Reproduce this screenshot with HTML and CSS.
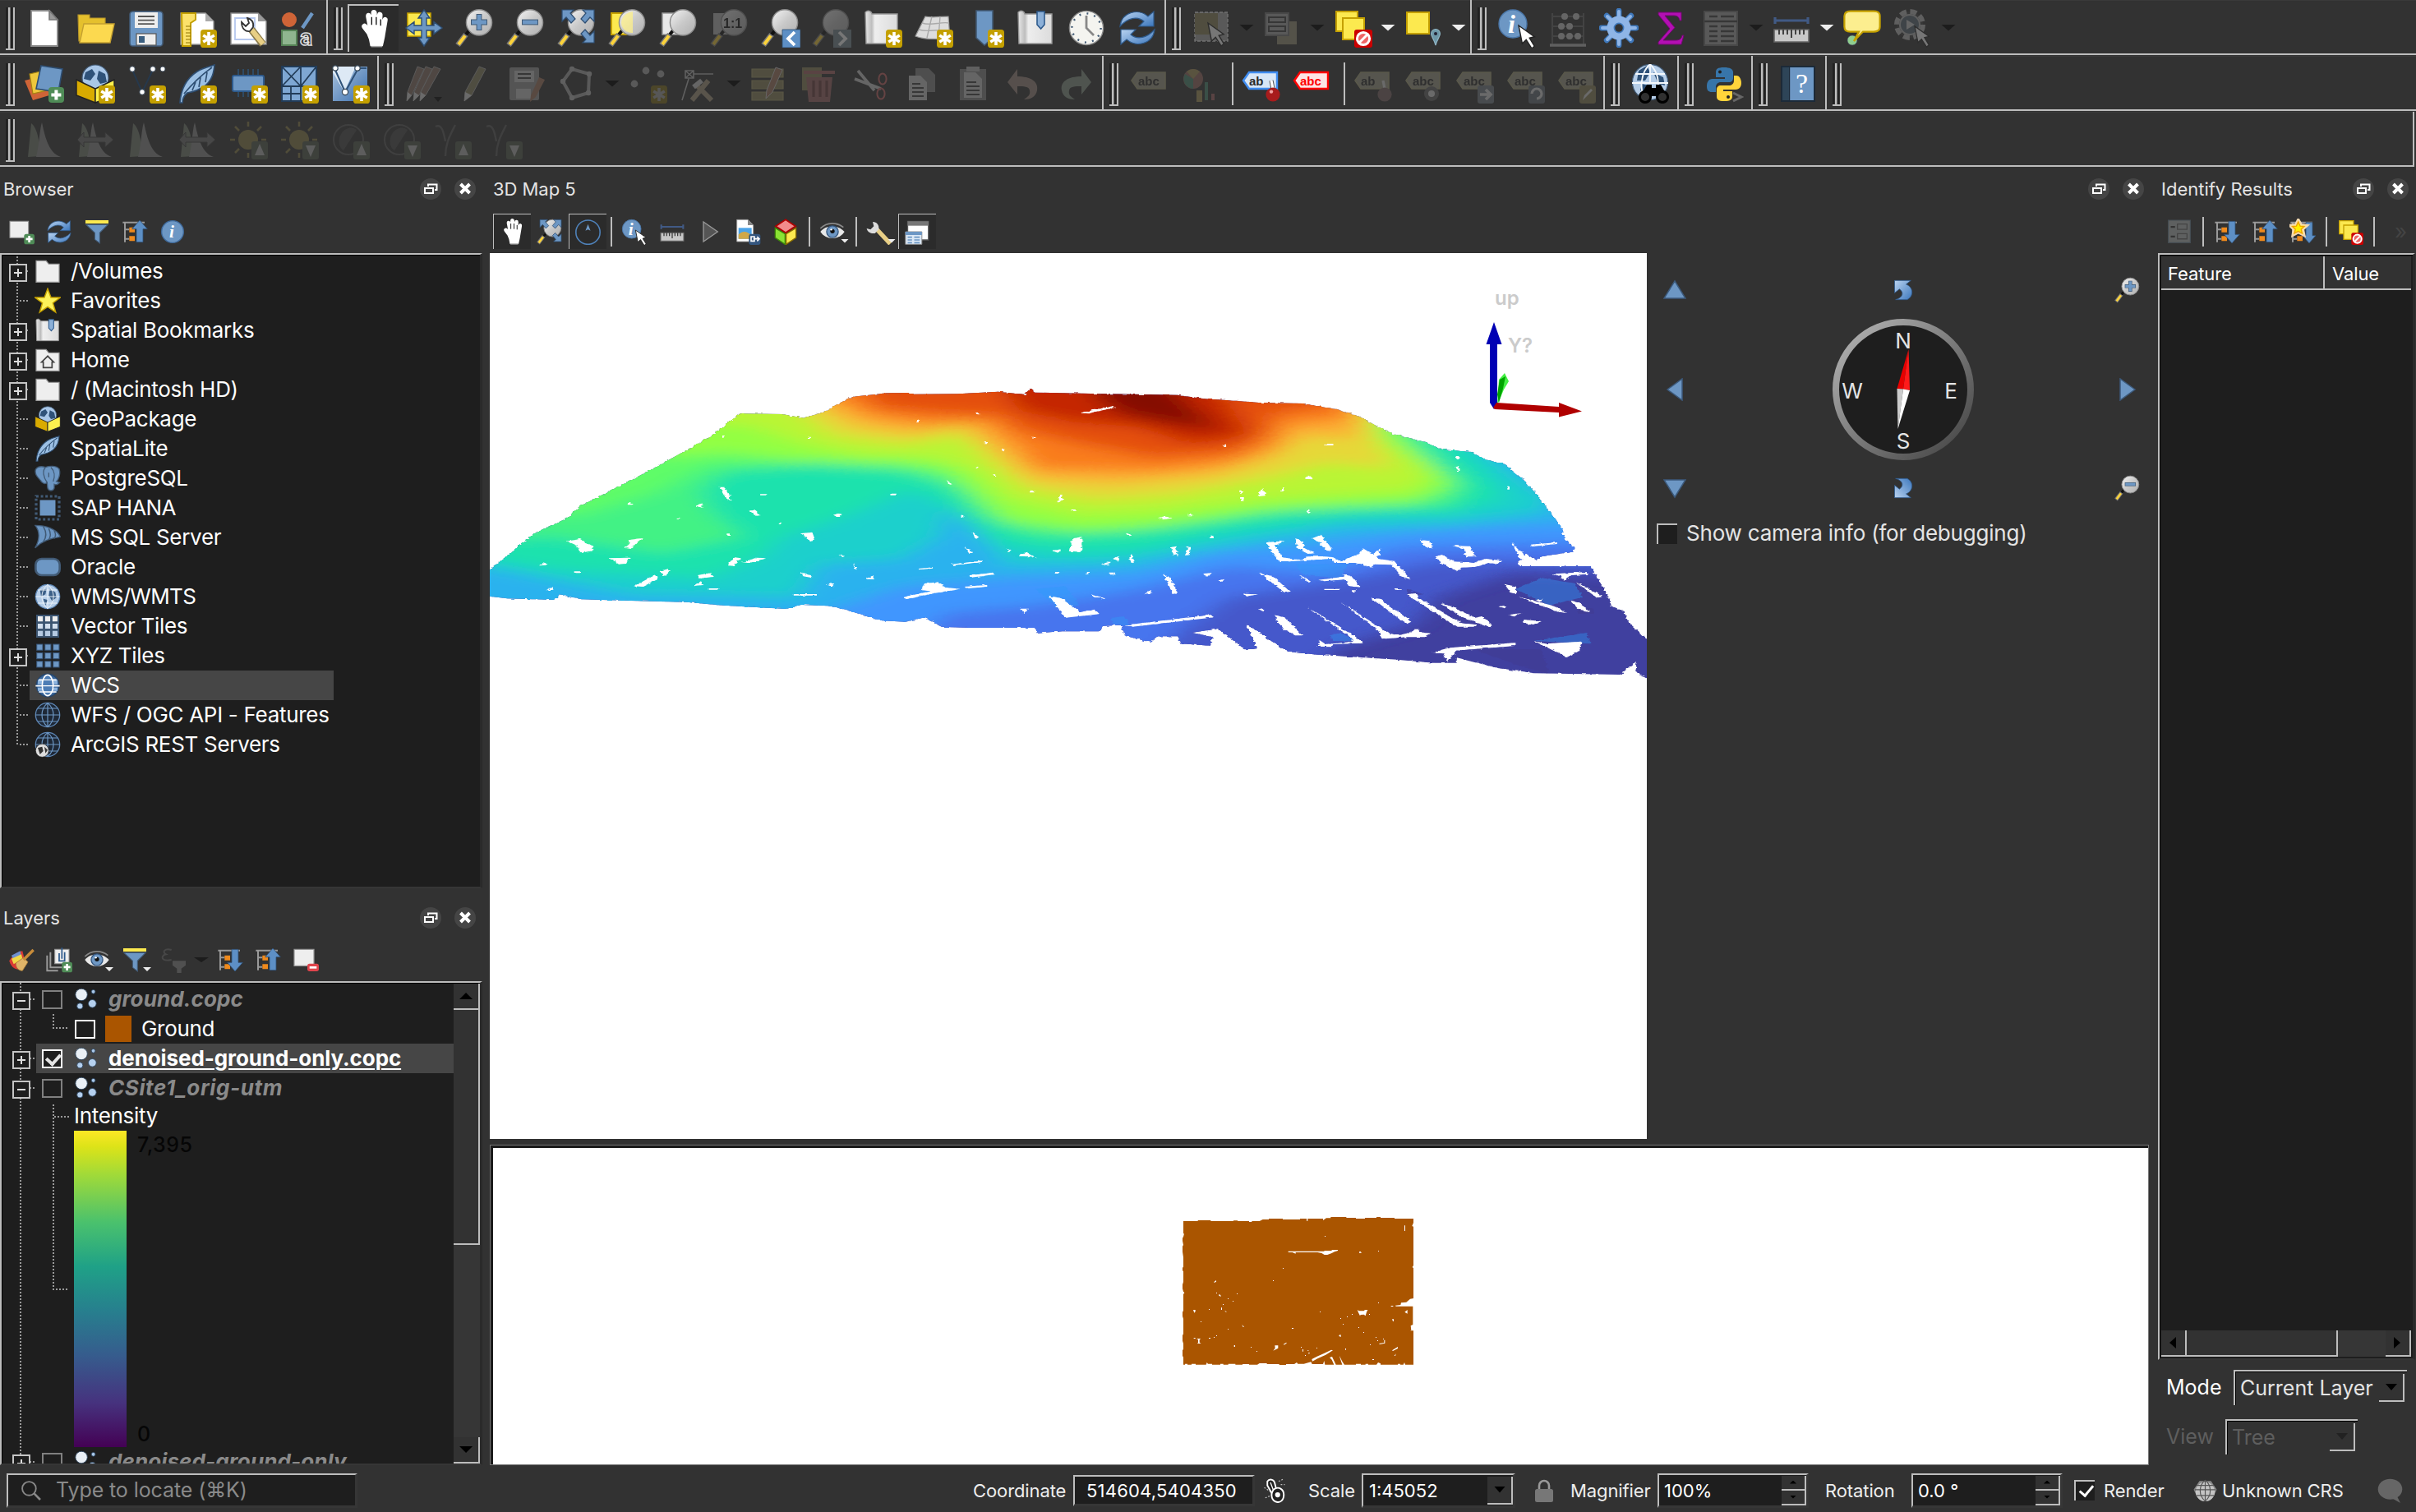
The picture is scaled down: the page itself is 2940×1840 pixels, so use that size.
FILE: index.html
```html
<!DOCTYPE html>
<html lang="en">
<head>
<meta charset="utf-8">
<title>QGIS</title>
<link rel="stylesheet" href="styles.css">
</head>
<body>
<svg class="defs" aria-hidden="true">
<defs>
<linearGradient id="gBlue" x1="0" y1="0" x2="1" y2="1"><stop offset="0" stop-color="#b9d3f0"/><stop offset="1" stop-color="#3c77bd"/></linearGradient>
<linearGradient id="gGrey" x1="0" y1="0" x2="1" y2="1"><stop offset="0" stop-color="#f4f4f4"/><stop offset=".5" stop-color="#c9c9c9"/><stop offset="1" stop-color="#b0b0b0"/></linearGradient>
<linearGradient id="gPaper" x1="0" x2="1"><stop offset="0" stop-color="#e9e9e9"/><stop offset=".2" stop-color="#bdbdbd"/><stop offset=".3" stop-color="#eee"/><stop offset="1" stop-color="#dcdcdc"/></linearGradient>
<linearGradient id="gRing" x1="0" y1="0" x2="1" y2="1"><stop offset="0" stop-color="#b8b8b8"/><stop offset="1" stop-color="#404040"/></linearGradient>
<g id="badge"><rect x="14" y="13" width="10" height="11" rx="1.8" fill="#c4a000"/><path d="M19 14.5v8M15.6 16.5l6.8 4M22.4 16.5l-6.8 4" stroke="#fff" stroke-width="1.8"/></g>
<g id="plusb"><rect x="14.5" y="14" width="9.5" height="9.5" rx="2" fill="#4f8c57"/><path d="M19.2 15.7v6M16.2 18.7h6" stroke="#fff" stroke-width="2"/></g>
<g id="nob"><rect x="13" y="13" width="11" height="11" rx="1.5" fill="#cc0000"/><circle cx="18.500" cy="18.500" r="3.800" fill="#e66" stroke="#fff" stroke-width="1.500"/><path d="M16 21l5-5" stroke="#fff" stroke-width="1.500"/></g>
<g id="lens"><path d="M1.5 22.500 6.500 16" stroke="#777" stroke-width="3.400"/><path d="M2 22 6 16.700" stroke="#fcd33a" stroke-width="2"/><path d="M6.500 16 9 13" stroke="#111" stroke-width="2"/><circle cx="14.500" cy="8.700" r="7.800" fill="url(#gGrey)" stroke="#8a8a8a" stroke-width=".7"/></g>
<g id="cursor"><path d="M0 0 2.200 11 4.600 8.700 8 14 9.600 12.600 6.600 7.600 9.600 6.800Z" fill="#fff" stroke="#222" stroke-width=".7"/></g>
<symbol id="new" viewBox="0 0 24 24"><path d="M4 1.500h11l5 5.500v16H4z" fill="#fff" stroke="#8a8a8a" stroke-width=".9"/><path d="M15 1.500V7h5z" fill="#999" stroke="#777" stroke-width=".8"/></symbol>
<symbol id="open" viewBox="0 0 24 24"><path d="M1.500 4h7v2H18v14H2z" fill="#e5c02d" stroke="#b8962a" stroke-width=".6"/><path d="M5 9.500h18.500L21 21H2.500z" fill="#fcd94f" stroke="#c4a030" stroke-width=".7"/></symbol>
<symbol id="save" viewBox="0 0 24 24"><rect x="2" y="2" width="20" height="21" rx="1.800" fill="#6d97c4" stroke="#415a75" stroke-width=".8"/><rect x="5" y="2.500" width="14" height="9.500" fill="#eee"/><path d="M7 5h10M7 7.300h10M7 9.600h10" stroke="#555" stroke-width=".9"/><rect x="6" y="15.500" width="12" height="7" fill="#eee" stroke="#555" stroke-width=".6"/><rect x="7.500" y="17" width="3.500" height="4" fill="#3b5f80"/></symbol>
<symbol id="layout" viewBox="0 0 24 24"><path d="M2 3h15l5 5v14H2z" fill="#fff" stroke="#999" stroke-width=".7"/><path d="M17 3v5h5z" fill="#aaa"/><path d="M2.500 3h8.500v4L8 9v14H3z" fill="#fce26b" stroke="#c4a000" stroke-width="1"/><path d="M5 11h3M5 13h3M5 15h3M5 17h3M5 19h3M5 21h3" stroke="#8d7300" stroke-width=".6"/><use href="#badge"/></symbol>
<symbol id="layoutmgr" viewBox="0 0 24 24"><path d="M1.500 3H18l5 5v14H1.500z" fill="#fff" stroke="#888" stroke-width=".7"/><path d="M18 3v5h5z" fill="#999"/><path d="M4 6h12v13H4z" fill="none" stroke="#b6c8ee" stroke-width=".9"/><path d="M14 13l7 9" stroke="#8a7a4a" stroke-width="4.500"/><path d="M14 13l7 8.700" stroke="#e8cf86" stroke-width="3"/><path d="M8 8.500c0 4 2.500 6 5 5.500l2-2.500c.6-3-1-5-3.500-5.500l1 3-2 2z" fill="#fff" stroke="#333" stroke-width=".9"/></symbol>
<symbol id="style" viewBox="0 0 24 24"><circle cx="6" cy="7" r="4.500" fill="#cf6437"/><path d="M14 12l6-9" stroke="#6d97c4" stroke-width="2.200"/><rect x="1.500" y="13.500" width="9" height="9" fill="#8fb58f" stroke="#558255" stroke-width="1"/><text x="12.500" y="22.500" class="t-a">a</text></symbol>
<symbol id="pan" viewBox="0 0 24 24"><path d="M8 15 5.300 11.500c-1.200-1.700.6-3 2-1.500L9 12 7.500 4.300C7.200 2.200 9.300 2 9.800 3.900L11 9l-.2-7c0-1.800 2.300-1.800 2.500 0L13.700 9l1-6c.3-1.600 2.300-1.300 2.200.4L16.500 10l1.600-4c.7-1.500 2.300-.8 2 .7L18.700 15c-.3 3-1 5-1.500 7.500H10.200C10 20 9 17 8 15Z" fill="#fff" stroke="#fff" stroke-width="1.200"/><path d="M10.600 9.500V4.500M13.500 9.500V4.500M16.300 10V6" stroke="#111" stroke-width=".7"/><path d="M10.200 23.300h7" stroke="#aaa" stroke-width=".8"/></symbol>
<symbol id="pansel" viewBox="0 0 24 24"><path d="M2 3h14v14H2z" fill="#fce94f" stroke="#c4a000" stroke-width=".8"/><path d="m12 1 3.500 5h-2v4.500H18v-2.200l5 3.700-5 3.700v-2.200h-4.500V18h2L12 23l-3.500-5h2v-4.500H6v2.200L1 12l5-3.700v2.200h4.500V6h-2z" fill="#6d97c4" stroke="#2e4e72" stroke-width=".7"/></symbol>
<symbol id="zin" viewBox="0 0 24 24"><use href="#lens"/><path d="M14.500 3.500v10M9.500 8.500h10" stroke="#415a75" stroke-width="3.400"/><path d="M14.500 4v9M10 8.500h9" stroke="#6d97c4" stroke-width="2.400"/></symbol>
<symbol id="zout" viewBox="0 0 24 24"><use href="#lens"/><path d="M9.500 8.500h10" stroke="#415a75" stroke-width="3.400"/><path d="M10 8.500h9" stroke="#6d97c4" stroke-width="2.400"/></symbol>
<symbol id="zfull" viewBox="0 0 24 24"><use href="#lens"/><g fill="#6d97c4" stroke="#2e4e72" stroke-width=".6"><path d="M3 1h7L8 3l3 3.500L8.500 9 5.500 5.500 3 8z"/><path d="M22.500 1h-7l2 2-3 3.500L17 9l3-3.500L22.500 8z"/><path d="M22.500 21h-7l2-2-3-3.500L17 13l3 3.500 2.500-2.500z"/></g></symbol>
<symbol id="zsel" viewBox="0 0 24 24"><path d="M2 3h13v13H2z" fill="#fce94f" stroke="#c4a000" stroke-width="1"/><use href="#lens"/><path d="M15 2v13a6.500 6.500 0 0 1-7-6c0-3.500 3-6.500 7-7z" fill="#fdf08a" opacity=".75"/></symbol>
<symbol id="zlayer" viewBox="0 0 24 24"><path d="M2 3h13v13H2z" fill="#e8e8e8" stroke="#999" stroke-width=".8"/><use href="#lens"/></symbol>
<symbol id="znative" viewBox="0 0 24 24"><path d="M2 3h13v13H2z" fill="#bbb"/><use href="#lens"/><text x="8" y="12" class="t-11">1:1</text></symbol>
<symbol id="zlast" viewBox="0 0 24 24"><use href="#lens"/><path d="M13 13h11v11H13z" fill="#5d8fc5" stroke="#2e4e72" stroke-width=".4"/><path d="m20.500 14.500-4 4 4 4" fill="none" stroke="#fff" stroke-width="1.900"/></symbol>
<symbol id="znext" viewBox="0 0 24 24"><use href="#lens"/><path d="M13 13h11v11H13z" fill="#7a8b95"/><path d="m16.500 14.500 4 4-4 4" fill="none" stroke="#fff" stroke-width="1.900"/></symbol>
<symbol id="newmap" viewBox="0 0 24 24"><path d="M1.500 2.500c2-2 4 0 4 1H21v18H2z" fill="url(#gPaper)" stroke="#999" stroke-width=".7"/><use href="#badge"/></symbol>
<symbol id="new3d" viewBox="0 0 24 24"><path d="M7 5c4 1 9 0 14 0l1 14c-6-1-14 1-21-2z" fill="#ddd" stroke="#999" stroke-width=".6"/><path d="M5 9c6 2 11-1 16.500 0M3 13c6 2 12-1 19 1M11 5 8 18M16 5l-1 13" stroke="#aaa" fill="none" stroke-width=".7"/><use href="#badge"/></symbol>
<symbol id="bmnew" viewBox="0 0 24 24"><path d="M7 1.500h10V18l-5 4.500L7 18z" fill="#6d97c4" stroke="#415a75" stroke-width=".8"/><use href="#badge"/></symbol>
<symbol id="bms" viewBox="0 0 24 24"><path d="M1.500 2.500c2-2 4 0 4 1H22v18H2z" fill="url(#gPaper)" stroke="#999" stroke-width=".7"/><path d="M13 2h4.500v8l-2.200 2.500L13 10z" fill="#8cb0d8" stroke="#2e5a8c" stroke-width=".8"/></symbol>
<symbol id="clock" viewBox="0 0 24 24"><circle cx="12" cy="12" r="10.300" fill="#f4f4f0" stroke="#888" stroke-width=".7"/><circle cx="12" cy="12" r="8.800" fill="none" stroke="#415a75" stroke-width="1.200" stroke-dasharray="1 3.600"/><path d="M12 4.500V12l4.500 4.500" fill="none" stroke="#888" stroke-width="1.400"/></symbol>
<symbol id="refresh" viewBox="0 0 24 24"><path d="M1.500 11C2.500 2 13 0 18.500 5L22 2v9h-9l3-3C12 4.500 6 6 1.500 11z" fill="url(#gBlue)" stroke="#2e5a8c" stroke-width=".6"/><path d="M22.500 13c-1 9-11.500 11-17 6L2 22v-9h9l-3 3c4 3.500 10 2 14.500-3z" fill="url(#gBlue)" stroke="#2e5a8c" stroke-width=".6"/></symbol>
<symbol id="select" viewBox="0 0 24 24"><path d="M2 2.500h20V20H2z" fill="#aaa" stroke="#eee" stroke-width=".7" stroke-dasharray="2 1"/><path d="M2 3h14v13H2z" fill="#8d865a"/><use href="#cursor" transform="translate(10 9)"/></symbol>
<symbol id="form" viewBox="0 0 24 24"><path d="M9 8h12v14H9z" fill="#9b9478"/><path d="M2 3h14v13.500H2z" fill="#aaa" stroke="#777"/><path d="M4 5.500h10v3H4zM4 11h10v3H4z" fill="none" stroke="#444"/></symbol>
<symbol id="desel" viewBox="0 0 24 24"><path d="M2 2h13v12H2z" fill="#fce94f" stroke="#c4a000" stroke-width="1"/><path d="M6 6h13v13H6z" fill="#fce94f" stroke="#c4a000" stroke-width="1"/><use href="#nob"/></symbol>
<symbol id="selloc" viewBox="0 0 24 24"><path d="M2 2.500h13.500V15.500H2z" fill="#fce94f" stroke="#c4a000" stroke-width="1"/><path d="M19.500 22.500c-1-4-2.700-5-2.700-7a2.700 2.700 0 0 1 5.400 0c0 2-1.700 3-2.700 7z" fill="#6d97a8" stroke="#8fb5c5" stroke-width=".6"/><circle cx="19.500" cy="15.500" r="1" fill="#223"/></symbol>
<symbol id="info" viewBox="0 0 24 24"><circle cx="9.500" cy="9.500" r="8.500" fill="#6d97c4" stroke="#4a76a8" stroke-width=".7"/><text x="6.500" y="15" class="t-i">i</text><use href="#cursor" transform="translate(13 10.500)"/></symbol>
<symbol id="abacus" viewBox="0 0 24 24"><path d="M2.500 3v20M21.500 3v20M2.500 5h19M2.500 11h19M2.500 17h19" stroke="#666" fill="none"/><path d="M1 22.500h22" stroke="#bbb" stroke-width="1.800"/><g fill="#ccc"><circle cx="10" cy="5" r="2"/><circle cx="17" cy="5" r="2"/><circle cx="8" cy="11" r="2"/><circle cx="13" cy="11" r="2"/><circle cx="8" cy="17" r="2"/><circle cx="13" cy="17" r="2"/><circle cx="18" cy="17" r="2"/></g></symbol>
<symbol id="gear" viewBox="0 0 24 24"><path d="M12 1.500v21M1.500 12h21M4.600 4.600l14.800 14.800M19.400 4.600 4.600 19.400" stroke="#3f78bb" stroke-width="3.400" stroke-linecap="round"/><path d="M12 2v20M2 12h20M5 5l14 14M19 5 5 19" stroke="#8fb5e6" stroke-width="2" stroke-linecap="round"/><circle cx="12" cy="12" r="7.300" fill="#8fb5e6"/><circle cx="12" cy="12" r="2.800" fill="#323232" stroke="#3f78bb" stroke-width=".8"/></symbol>
<symbol id="sigma" viewBox="0 0 24 24"><path d="M5 2.500h14v5h-1c-.5-2-1-3-4-3H9l6 7.300-7 7.700h7c3 0 4-.8 4.500-3h1L19 22H5v-1.500l7-8L5 4z" fill="#b30fb3" stroke="#70086f" stroke-width=".5"/></symbol>
<symbol id="table" viewBox="0 0 24 24"><path d="M2 2h20v20.500H2z" fill="#aaa" stroke="#777"/><path d="M2 8h20M5 5h5M12 5h8M5 11h5M12 11h8M5 14h5M12 14h8M5 17h5M12 17h8M5 20h5M12 20h8" stroke="#444" stroke-width="1.200"/></symbol>
<symbol id="measure" viewBox="0 0 24 24"><path d="M2 7.500h20M2 5.500v4M22 5.500v4" stroke="#415a85" stroke-width="1.600"/><path d="M1.500 13h21v7.500h-21z" fill="#c8c8c8" stroke="#666" stroke-width=".8"/><path d="M4.500 13v3M7 13v3M9.500 13v3M12 13v5M14.500 13v3M17 13v3M19.500 13v3" stroke="#333" stroke-width=".9"/></symbol>
<symbol id="tip" viewBox="0 0 24 24"><ellipse cx="6" cy="19.500" rx="3" ry="3" fill="#8fce8f" stroke="#446" stroke-width=".3"/><path d="M5 1.800h14c3 0 3.800 1 3.800 3v6.500c0 2-1 3-3.800 3h-6.500L7 20l3-5.700H5c-2.700 0-3.800-1-3.800-3V4.800c0-2 1-3 3.800-3z" fill="#fcee8f" stroke="#c4a000" stroke-width="1.100"/></symbol>
<symbol id="run" viewBox="0 0 24 24"><circle cx="10" cy="10" r="8" fill="#444" stroke="#bbb" stroke-width="3" stroke-dasharray="4 2.280"/><circle cx="10" cy="10" r="6" fill="#5a6a75" stroke="#bbb"/><path d="m8 7 5 3-5 3z" fill="#ccc"/><use href="#cursor" transform="translate(13 11) scale(.9)"/></symbol>
<symbol id="addlayer" viewBox="0 0 24 24"><path d="M0 10l12-3 3 12-10 3z" fill="#cf6437"/><path d="M3 6l13-3 2 12-13 3z" fill="#eec73c" stroke="#a58412" stroke-width=".6"/><path d="M10 1l13 2-2.500 14L7 15z" fill="#6d97c4" stroke="#2e4e72" stroke-width=".8"/><use href="#plusb"/></symbol>
<symbol id="gpkg" viewBox="0 0 24 24"><circle cx="12" cy="8.500" r="8" fill="#a9c7e8" stroke="#415a75" stroke-width=".6"/><path d="M6 5l4-2 2 3-3 4-4-1zM14 4l4 2 1 5-4 1-2-3z" fill="#2f5279"/><path d="M.500 9.500 12 15v8.500L.500 19z" fill="#d9ab00" stroke="#222" stroke-width=".7"/><path d="M23.500 9.500 12 15v8.500L23.500 19z" fill="#fdf14f" stroke="#222" stroke-width=".7"/></symbol>
<symbol id="gpkgn" viewBox="0 0 24 24"><use href="#gpkg" width="24" height="24"/><use href="#badge"/></symbol>
<symbol id="vnew" viewBox="0 0 24 24"><path d="M3.500 3.500 9.500 17 16 3.500" stroke="#26384c" fill="none"/><g fill="#fff" stroke="#345" stroke-width=".4"><circle cx="3.500" cy="3" r="1.600"/><circle cx="16" cy="3" r="1.600"/><circle cx="22" cy="3" r="1.500"/><circle cx="9.500" cy="17" r="1.600"/></g><use href="#badge"/></symbol>
<symbol id="feather" viewBox="0 0 24 24"><path d="M1.500 23.500C2 16 5 9 12 4.500 16 2 20 1.500 22.500.5 22 5 21.500 9 17 13c-4 3-8 4-11 4.500-2 1.500-3 4-3 6z" fill="#9cc0e4" stroke="#2e4e72" stroke-width=".8"/><path d="M4 18C9 12 14 7 21 2M9 16l2-5M13 14l1-6M17 11l1-6" stroke="#2e4e72" stroke-width=".8" fill="none"/></symbol>
<symbol id="feathern" viewBox="0 0 24 24"><use href="#feather" width="24" height="24"/><use href="#badge"/></symbol>
<symbol id="chipn" viewBox="0 0 24 24"><path d="M6 3v17M9 3v17M12 3v17M15 3v17M18 3v17" stroke="#2e5070" stroke-width=".8"/><rect x="2.500" y="7" width="19" height="9.500" rx="1" fill="#6d97c4" stroke="#2e5a8c"/><use href="#badge"/></symbol>
<symbol id="meshn" viewBox="0 0 24 24"><path d="M1.500 1.500h21v21h-21z" fill="#7ea7d3" stroke="#223c58"/><path d="M13 1.500v21M1.500 13.500h21M1.500 1.500 13 13.500M13 1.500 1.500 13.500 M22.500 1.500 13 13.500M7 13.500v9M1.500 18h11.500" stroke="#223c58" fill="none" stroke-width=".9"/><use href="#badge"/></symbol>
<symbol id="vmeshn" viewBox="0 0 24 24"><path d="M1.500 1.500h21v21h-21z" fill="url(#gBlue)" opacity=".9"/><path d="M1.500 1.500h14L8.500 17 1.500 5z" fill="#dde9f5"/><path d="M2.500 2.500 9 17 17 2.500l5 0" stroke="#2f5279" fill="none"/><g fill="#fff" stroke="#345" stroke-width=".6"><circle cx="3" cy="2.500" r="1.600"/><circle cx="16.500" cy="2.500" r="1.600"/><circle cx="9" cy="17" r="1.800"/></g><use href="#badge"/></symbol>
<symbol id="pencil" viewBox="0 0 24 24"><path d="M14.500 1.500l4 1.500L10 19l-4.500 3.500L6 17z" fill="#8c8560" stroke="#aaa" stroke-width=".5"/><path d="M6 17l4 2-4.500 3.500z" fill="#ddd"/></symbol>
<symbol id="pencils" viewBox="0 0 24 24"><g fill="#8c7468" stroke="#aaa" stroke-width=".5"><path d="M8 1.500l4 1.500L4.500 19 1.500 22.500 2 17z"/><path d="M13 1.500l4 1.500L9 19l-3.500 3.500L6 17z"/><path d="M18 1.500l4 1.500L13 19l-3.500 3.500L10 17z"/></g><path d="M2 17l2.500 2-3 3.500zM6 17l3 2-3.500 3.500zM10 17l3 2-3.500 3.500z" fill="#ddd"/><path d="M18 20h5l-2.500 3z" fill="#000"/></symbol>
<symbol id="savee" viewBox="0 0 24 24"><g fill="#999"><rect x="2" y="2" width="18" height="20" rx="1"/></g><path d="M5 4h12v7H5zM6 15h9v6H6z" fill="#ccc"/><path d="M7 6h8M7 8.500h8" stroke="#444"/><path d="M20 8l3.500 1.500L18 20l-3.500 3 .5-4z" fill="#a77a62"/></symbol>
<symbol id="poly" viewBox="0 0 24 24"><path d="M3.500 10.500 9 3l10.500 3-.5 11.500L9 20.500z" fill="none" stroke="#aaa" stroke-width="2"/><g fill="#bbb"><circle cx="3.500" cy="10.500" r="1.600"/><circle cx="9" cy="3" r="1.600"/><circle cx="19.500" cy="6" r="1.600"/><circle cx="19" cy="17.500" r="1.600"/><circle cx="9" cy="20.500" r="1.600"/></g></symbol>
<symbol id="addpt" viewBox="0 0 24 24"><g fill="#aaa"><circle cx="11" cy="4" r="2.200"/><circle cx="20" cy="6" r="2.200"/><circle cx="4" cy="12" r="2.200"/></g><g opacity=".55"><use href="#badge"/></g></symbol>
<symbol id="vertex" viewBox="0 0 24 24"><path d="M4 4h5v4.500H4zM4 4l5 4.500M9 4 4 8.500M9 6h12M6 9 2 22" fill="none" stroke="#bbb" stroke-width=".8"/><path d="M8 22 18 10M11 13l9 9" stroke="#a99a80" stroke-width="3"/><path d="M9 14l5-4" stroke="#ccc" stroke-width="3"/></symbol>
<symbol id="multi" viewBox="0 0 24 24"><path d="M1.500 3h19v5h-19zM1.500 10h19v5h-19zM1.500 17h19v5h-19z" fill="#8d865a" stroke="#aaa06a" stroke-width=".6"/><path d="M16 2l4 1.500L14 17l-4 4 .5-5z" fill="#a77a62" stroke="#ccc" stroke-width=".5"/></symbol>
<symbol id="trash" viewBox="0 0 24 24"><path d="M1 2h12v14H1z" fill="#8d865a"/><path d="M3.500 8h16l-1.500 15H5z" fill="#a06868"/><path d="M2 5h19" stroke="#a86868" stroke-width="2"/><path d="M8 10v10M12 10v10M16 10v10" stroke="#704040" stroke-width="1.600"/></symbol>
<symbol id="cut" viewBox="0 0 24 24"><path d="M2 9l16 6M4 4l10 12" stroke="#ccc" stroke-width="1.800"/><ellipse cx="19" cy="9" rx="2.300" ry="3.300" fill="none" stroke="#c66"/><ellipse cx="18" cy="18" rx="2.300" ry="3.300" fill="none" stroke="#c66"/></symbol>
<symbol id="copy" viewBox="0 0 24 24"><path d="M8 2.500h8l4 4V17H8z" fill="#888"/><path d="M4 7h7l4 4v11H4z" fill="#ccc"/><path d="M6 12h5M6 14.500h7M6 17h7M6 19.500h7" stroke="#444"/></symbol>
<symbol id="paste" viewBox="0 0 24 24"><path d="M4 3h16v19H4z" fill="#888"/><path d="M8 1.500h8v3H8z" fill="#bbb"/><path d="M6.500 5h7l4 4v11.500h-11z" fill="#ccc"/><path d="M8 11h6M8 13.500h8M8 16h8M8 18.500h8" stroke="#444"/></symbol>
<symbol id="undo" viewBox="0 0 24 24"><path d="M2 11 8 3v4.500c8 0 13 3 12 8.500-.7 4-4 5.500-8 5.500 3-2 4-3 3.500-5.500C15 13.500 12 13.500 8 13.500v5z" fill="#a08c82"/></symbol>
<symbol id="redo" viewBox="0 0 24 24"><path d="M22 11l-6-8v4.500C8 7.500 3 10.500 4 16c.7 4 4 5.500 8 5.500-3-2-4-3-3.500-5.500C9 13.500 12 13.500 16 13.500v5z" fill="#8a9a8c"/></symbol>
<symbol id="label" viewBox="0 0 24 24"><path d="M1.500 10 5 5h17v10H5z" fill="#a09d88" stroke="#a9a57d" stroke-width=".8"/><text x="5.500" y="13" class="t-abc">abc</text></symbol>
<symbol id="diagram" viewBox="0 0 24 24"><circle cx="8" cy="9" r="6" fill="#9b6a62"/><path d="M8 9V15A6 6 0 0 1 3 6z" fill="#4d8a72"/><path d="M8 9 4 4.500a6 6 0 0 1 8 0z" fill="#a9985a"/><path d="M10 16h3.500v7H10z" fill="#a9985a"/><path d="M15 11h2v11h-2z" fill="#4d8a72"/><path d="M19 18h2v4h-2z" fill="#a66"/></symbol>
<symbol id="labpin" viewBox="0 0 24 24"><path d="M1.500 10 5 5h17v10H5z" fill="#d7e6f7" stroke="#3f8cf0" stroke-width="1.200"/><text x="5" y="13" class="t-abc">ab</text><path d="M18.500 10l1.200 6" stroke="#555" stroke-width="2.600"/><path d="M18.500 10l1.200 6" stroke="#fff" stroke-width="1.600"/><circle cx="19.500" cy="18.500" r="4.300" fill="#a81c1c"/><circle cx="18.500" cy="16.800" r="1.100" fill="#f0a0a0"/></symbol>
<symbol id="labpinx" viewBox="0 0 24 24"><path d="M1.500 10 5 5h17v10H5z" fill="#a09d88" stroke="#a9a57d" stroke-width=".8"/><text x="5" y="13" class="t-abc">ab</text><path d="M18.500 10l1.200 6" stroke="#ddd" stroke-width="1.600"/><circle cx="19.500" cy="18.500" r="4.300" fill="#806868"/></symbol>
<symbol id="labred" viewBox="0 0 24 24"><path d="M1.500 10 5 5h17v10H5z" fill="#fde4e4" stroke="#f00" stroke-width="1.200"/><text x="5" y="13" class="t-abc red">abc</text></symbol>
<symbol id="labeye" viewBox="0 0 24 24"><use href="#label" width="24" height="24"/><circle cx="17" cy="18" r="4.500" fill="#666"/><circle cx="17" cy="18" r="2" fill="#ddd"/></symbol>
<symbol id="labmove" viewBox="0 0 24 24"><use href="#label" width="24" height="24"/><rect x="14" y="13" width="10" height="11" rx="1.500" fill="#778088"/><path d="M15.500 18.500h6M19 15.500l3 3-3 3" stroke="#ddd" stroke-width="1.800" fill="none"/></symbol>
<symbol id="labrot" viewBox="0 0 24 24"><use href="#label" width="24" height="24"/><rect x="14" y="13" width="10" height="11" rx="1.500" fill="#667078"/><path d="M16 18a3 3 0 1 1 3 3" stroke="#ddd" stroke-width="1.600" fill="none"/></symbol>
<symbol id="labedit" viewBox="0 0 24 24"><use href="#label" width="24" height="24"/><rect x="14" y="13" width="10" height="11" rx="1.500" fill="#8d865a"/><path d="M16 22l1-3 4-4 1 1-4 4z" fill="#ddd"/></symbol>
<symbol id="bino" viewBox="0 0 24 24"><circle cx="12" cy="11" r="10.800" fill="#b5cde8" stroke="#415a75" stroke-width=".6"/><path d="M5 4l5-3 2 4-3 5H4zM14 5l6 3 1 5-4-1zM7 12l4 1-1 5-4-2z" fill="#2f5279"/><path d="M1 11.500h22M3 6h18M12 0v12M12 0C6 5 6 15 8 20M12 0C17 5 17 10 17 15" fill="none" stroke="#f4f8fc" stroke-width=".9"/><path d="M10 12.500h3v2h2.500v-2h3l4 7H6z" fill="#000"/><circle cx="9" cy="20" r="3.300" fill="#303030" stroke="#000" stroke-width="1.500"/><circle cx="19.500" cy="20" r="3.300" fill="#303030" stroke="#000" stroke-width="1.500"/></symbol>
<symbol id="python" viewBox="0 0 24 24"><path d="M12 2c-4 0-5 1-5 3v3h5.500v1H5C2.500 9 1.500 11 1.500 13.500S2.500 17 4.500 17H7v-3c0-2 1.500-3 3-3h5c1.500 0 2.500-1 2.500-2.500V5c0-2-2-3-5.500-3z" fill="#3775a9"/><path d="M12 22.500c4 0 5-1 5-3v-3h-5.500v-1H19c2.500 0 3.500-2 3.500-4S21.500 7 19.500 7H18v3c0 2-1.500 3-3 3H10c-1.500 0-2.500 1-2.500 2.500v4c0 2 1 3 4.500 3z" fill="#ffd43b"/><circle cx="9.500" cy="4.700" r="1" fill="#222"/><circle cx="14.500" cy="20" r="1" fill="#222"/><path d="m17.500 17.500 5 2.500-5 2.500" fill="none" stroke="#666" stroke-width="1.500"/></symbol>
<symbol id="help" viewBox="0 0 24 24"><path d="M2 1.500h20v21H2z" fill="#6d97c4" stroke="#1c2a38"/><path d="M2.500 2h4v20h-4z" fill="#2e4558"/><path d="M6.800 2v20" stroke="#1c2a38" stroke-width=".6"/><text x="10.500" y="17.500" class="t-q">?</text></symbol>
<symbol id="hist" viewBox="0 0 24 24"><path d="M2 22.500 4 2c4 3 5 12 6 20z" fill="#8d9a86"/><path d="M7 22.500C9 15 9 6 10.500 1.500 12 8 14 20 22 22.500z" fill="#aaa"/></symbol>
<symbol id="hista" viewBox="0 0 24 24"><use href="#hist" width="24" height="24"/><path d="M1 12l4-4.500v3h13v-3l5 4.500-5 4.500v-3H5v3z" fill="#888" stroke="#444" stroke-width=".5"/></symbol>
<g id="upb"><rect x="14" y="13" width="10" height="11" rx="1.500" fill="#5e6a58"/><path d="M19 14.500l3 7h-6z" fill="#ddd"/></g>
<g id="dnb"><rect x="14" y="13" width="10" height="11" rx="1.500" fill="#5e6a58"/><path d="M19 22.500l3-7h-6z" fill="#ddd"/></g>
<g id="sunp"><circle cx="12" cy="12" r="6" fill="#a99a50"/><path d="M12 1v3M12 20v3M1 12h3M20 12h3M4 4l2.500 2.500M20 4l-2.500 2.500M4 20l2.500-2.500" stroke="#a99a50" stroke-width="1.300"/></g>
<g id="conp" opacity=".5"><circle cx="11" cy="12" r="9" fill="none" stroke="#999"/><path d="M16 6C11 2 4 8 5.500 15c1 3 2.500 3.500 2.500 3.500z" fill="#777"/></g>
<g id="gamp" opacity=".5"><path d="M2 4c4-2 5 4 6 9M14 3C11 9 8 14 8 22" fill="none" stroke="#999" stroke-width="1.200"/></g>
<symbol id="sunu" viewBox="0 0 24 24"><use href="#sunp"/><use href="#upb"/></symbol>
<symbol id="sund" viewBox="0 0 24 24"><use href="#sunp"/><use href="#dnb"/></symbol>
<symbol id="conu" viewBox="0 0 24 24"><use href="#conp"/><use href="#upb"/></symbol>
<symbol id="cond" viewBox="0 0 24 24"><use href="#conp"/><use href="#dnb"/></symbol>
<symbol id="gamu" viewBox="0 0 24 24"><use href="#gamp"/><use href="#upb"/></symbol>
<symbol id="gamd" viewBox="0 0 24 24"><use href="#gamp"/><use href="#dnb"/></symbol>
<symbol id="add" viewBox="0 0 24 24"><path d="M1.500 2.500h17v15h-17z" fill="#eee" stroke="#999" stroke-width=".8"/><use href="#plusb"/></symbol>
<symbol id="rem" viewBox="0 0 24 24"><path d="M1.500 2.500h18v15h-18z" fill="#eee" stroke="#999" stroke-width=".9"/><rect x="13.500" y="15.500" width="10.500" height="7" rx="2" fill="#e0444c"/><path d="M15.500 19h6.500" stroke="#fff" stroke-width="2"/></symbol>
<symbol id="filter" viewBox="0 0 24 24"><path d="M1.500 1.500h21v3h-21z" fill="#fce94f"/><path d="M2 5.500h20L14.500 13v9.500L10 19v-6z" fill="#6d97c4" stroke="#415a75" stroke-width=".8"/></symbol>
<g id="treep"><path d="M1 3.500h20M3 3.500v18M3 10h4M3 18.500h4" stroke="#999" stroke-width="1.500" fill="none"/><path d="M7 8h5v4.500H7zM7 16h5v4.500H7z" fill="#f08a1c"/></g>
<symbol id="coll" viewBox="0 0 24 24"><use href="#treep"/><path d="m16.500 1.500 7 8h-4v12h-6v-12h-4z" fill="#5d8fc5" stroke="#2e4e72" stroke-width=".6"/></symbol>
<symbol id="expa" viewBox="0 0 24 24"><use href="#treep"/><path d="m16.500 22.500 7-8h-4v-12h-6v12h-4z" fill="#5d8fc5" stroke="#2e4e72" stroke-width=".6"/></symbol>
<symbol id="stara" viewBox="0 0 24 24"><use href="#treep"/><path d="m18 22.500 6-7h-3v-12h-6v12h-3z" fill="#5d8fc5" stroke="#2e4e72" stroke-width=".6"/><path d="m8 0 3 5.300 6 .7-4.300 4 1.300 6-6-3-5.500 3L3.500 10-.5 6l6-.7z" fill="#fff57a" stroke="#f5d9b0" stroke-width="1.600"/><path d="m8 3 1.800 3.800 3.700.4-2.800 2.600.9 3.700L8 11.600l-3.500 1.900.9-3.700-2.800-2.600 3.700-.4z" fill="#fff000" stroke="#f0a000"/></symbol>
<symbol id="infob" viewBox="0 0 24 24"><circle cx="12" cy="12" r="10" fill="#6d97c4" stroke="#3f6a9c" stroke-width="1"/><text x="9" y="17.500" class="t-i">i</text></symbol>
<symbol id="folder" viewBox="0 0 24 24"><path d="M1.500 2.500h9l2.500 3h9.500v16.500h-21z" fill="#eee" stroke="#999" stroke-width=".9"/></symbol>
<symbol id="home" viewBox="0 0 24 24"><path d="M1.500 2.500h9l2.500 3h9.500v16.500h-21z" fill="#eee" stroke="#999" stroke-width=".9"/><path d="M12 8.500 6.500 14H8v5h8v-5h1.500z" fill="none" stroke="#444" stroke-width="1.300"/></symbol>
<symbol id="star" viewBox="0 0 24 24"><path d="m12 1 3 8h8.500l-6.700 5 2.500 8.500-7.300-5-7.300 5L7.200 14 .5 9H9z" fill="#fdf25a" stroke="#c4a000" stroke-width="1.100"/></symbol>
<symbol id="pg" viewBox="0 0 24 24"><path d="M1 4c2-3 6-3 9-2 4-1.500 10-1.500 12.500 1.500C24 8 22 13 20 15l3 1c-2 2-4 2-5 1.500V21c-1 3-5 3-6 0l-.5-5c-2 2-5 0-6-2C2 10 0 8 1 4z" fill="#6d97c4" stroke="#415a75" stroke-width="1"/><path d="M10 2C7 5 8 11 11.500 16M15 2c3 3 4 8 2 13M13 7v4" fill="none" stroke="#415a75"/></symbol>
<symbol id="sap" viewBox="0 0 24 24"><rect x="1.500" y="1.500" width="21" height="21" fill="none" stroke="#415a75" stroke-width="2.400" stroke-dasharray="2.200 2"/><rect x="4.500" y="4.500" width="15" height="15" fill="#6d97c4" stroke="#1e1e1e" stroke-width=".8"/></symbol>
<symbol id="mss" viewBox="0 0 24 24"><path d="M.5 1c9 0 20 3 23 10.500-9 1-17 4-23 10C5 14 5 6 .5 1z" fill="#6d97c4" stroke="#415a75"/><path d="M8 2c3 5 3 10 0 14M13 4c2 4 2 7 0 10M18 6c1.500 2.500 1.500 5 0 7" fill="none" stroke="#415a75" stroke-width="1.100"/></symbol>
<symbol id="ora" viewBox="0 0 24 24"><rect x="1" y="4.500" width="22" height="15" rx="5.500" fill="#6d97c4" stroke="#415a75" stroke-width="2"/></symbol>
<symbol id="wms" viewBox="0 0 24 24"><circle cx="12" cy="12" r="11" fill="#b5cde8" stroke="#5d86b5"/><path d="M5 6l6-1-1 5-4 2zM14 5l5 3 1 5-4 3-3-5zM8 14l4 1-2 5z" fill="#3b5f87"/><path d="M1 12h22M3 6h18M3 18h18M12 1v22M12 1c-7 6-7 16 0 22M12 1c7 6 7 16 0 22" fill="none" stroke="#eef4fa" stroke-width=".7"/></symbol>
<symbol id="vt" viewBox="0 0 24 24"><path d="M1.500 1.500h21v21h-21z" fill="#3b5470"/><g fill="#eee"><path d="M3 3h4.600v4.600H3zM9.700 3h4.600v4.600H9.700zM16.400 3H21v4.600h-4.600z"/><path d="M3 9.700h4.600v4.600H3zM9.700 9.700h4.600v4.600H9.700zM16.400 9.700H21v4.600h-4.600z" fill="#d4e0ee"/><path d="M3 16.400h4.600V21H3zM9.700 16.400h4.600V21H9.700zM16.400 16.400H21V21h-4.600z" fill="#b5cae2"/></g></symbol>
<symbol id="xyz" viewBox="0 0 24 24"><path d="M2 1.500h5.500V7H2zM9.500 1.500H15V7H9.500zM17 1.500h5.500V7H17zM2 9.300h5.500v5.500H2zM9.500 9.300H15v5.500H9.500zM17 9.300h5.500v5.500H17zM2 17h5.500v5.500H2zM9.500 17H15v5.500H9.500zM17 17h5.500v5.500H17z" fill="#6d97c4" stroke="#344f70" stroke-width=".8"/></symbol>
<symbol id="wcs" viewBox="0 0 24 24"><circle cx="12" cy="12" r="10.300" fill="#3a679c" stroke="#26466c"/><path d="M3 7h18v4H3zM3 14h18v3H3z" fill="#8db4de"/><path d="M1 12.500h22M4 7h16M4 18h16" stroke="#fff" stroke-width="1.200"/><ellipse cx="12" cy="12" rx="5" ry="9.500" fill="#4d7db5" stroke="#fff" stroke-width="1.200"/><path d="M7 12.500h10M8 7h8M8 18h8" fill="none" stroke="#fff" stroke-width="1"/></symbol>
<symbol id="wfs" viewBox="0 0 24 24"><circle cx="12" cy="12" r="11" fill="#1e2836" stroke="#5d86b5" stroke-width="1"/><path d="M1 12h22M3 6h18M3 18h18M12 1v22M12 1c-7 6-7 16 0 22M12 1c7 6 7 16 0 22" fill="none" stroke="#6d97c4" stroke-width=".9"/></symbol>
<symbol id="arc" viewBox="0 0 24 24"><use href="#wfs" width="24" height="24"/><circle cx="7" cy="17.500" r="6" fill="#ddd" stroke="#1e1e1e" stroke-width=".5"/><path d="M3 15l4-1 1 4-3 3zM9 14l3 3-2 3z" fill="#333"/></symbol>
<symbol id="brush" viewBox="0 0 24 24"><path d="M1 13c3-5 7-8 12-9l2 8-4 9C7 21 3 20 1 13z" fill="#d93a34"/><path d="M3 8l8-4 1 5-7 4z" fill="#6d8fd0"/><path d="M3 11l9-4 1 4-8 5z" fill="#f0d848"/><path d="M7 15l7-5 4 4-5 8c-3 0-6-2-6-7z" fill="#e0b468" stroke="#a87c38" stroke-width=".6"/><path d="M14 12l9-9" stroke="#c88c3a" stroke-width="2.600"/></symbol>
<symbol id="grp" viewBox="0 0 24 24"><path d="M1 8v14h10M4 5v14h12" fill="none" stroke="#999" stroke-width="1.500"/><path d="M8 2.500h13v13H8z" fill="#eee" stroke="#999" stroke-width=".8"/><path d="M12 6v7h5V5M14.500 1v10" fill="none" stroke="#2e5a8c" stroke-width="1.300"/><use href="#plusb"/></symbol>
<symbol id="eye" viewBox="0 0 24 24"><path d="M1 12c5-6.500 16-6.500 22 0-5 8-17 8-22 0z" fill="#e8e8e8"/><path d="M1 9C7 3 16 3 22 8" fill="none" stroke="#888" stroke-width="1.300"/><circle cx="12" cy="12" r="5.300" fill="#6d97c4" stroke="#34567f"/><circle cx="12" cy="11.500" r="2" fill="#111"/><circle cx="11" cy="10" r=".9" fill="#fff"/></symbol>
<symbol id="eps" viewBox="0 0 24 24"><path d="M11 3C5 1 2 5 6 7c-5 1-5 7 5 5" fill="none" stroke="#888" stroke-width="1.500"/><path d="M12 13h12v4l-4 3v4h-4v-4l-4-3z" fill="#aaa"/></symbol>
<symbol id="dial" viewBox="0 0 24 24"><ellipse cx="12" cy="12.500" rx="11" ry="11" fill="none" stroke="#4f82ba" stroke-width="1.200"/><path d="m12 5 2.300 6L12 10l-2.300 1z" fill="#6d97c4"/></symbol>
<symbol id="play" viewBox="0 0 24 24"><path d="M6 3l13 9-13 9z" fill="#555" stroke="#999" stroke-width="1"/></symbol>
<symbol id="export" viewBox="0 0 24 24"><path d="M2 1h10l5 5v15H2z" fill="#fff" stroke="#999" stroke-width=".7"/><path d="M12 1v5h5z" fill="#888"/><path d="M3.500 8.500h12v10h-12z" fill="#4aa3e8"/><path d="M3.500 18.500v-4c4-4 8-3 12 1v3z" fill="#d0a848"/><rect x="13" y="14" width="10.500" height="10" rx="2" fill="#34567f"/><path d="M15 16.500h3v4h-3zM17 18.500h5M20.500 16.500l2 2-2 2" fill="none" stroke="#fff" stroke-width="1.200"/></symbol>
<symbol id="cube" viewBox="0 0 24 24"><path d="M12 1l9 6-9 6-9-6z" fill="#f28b8b" stroke="#b00000" stroke-width="1.300"/><path d="M2.500 8.500 11.500 14v9.500l-9-6z" fill="#8ae234" stroke="#3f8a08"/><path d="M21.500 8.500 12.500 14v9.500l9-6z" fill="#fce94f" stroke="#8a6c00"/></symbol>
<symbol id="wrench" viewBox="0 0 24 24"><path d="M9 9l13 14" stroke="#e8cf86" stroke-width="4"/><path d="M11.500 10 8 13.500c-4 .5-7-1.500-7.500-4.500l3.500 1 3-3-1-4c4 0 6 3 5.500 7z" fill="#ddd"/></symbol>
<symbol id="win" viewBox="0 0 24 24"><path d="M3 2.500h19v17H3z" fill="#fff" stroke="#555"/><path d="M3 2.500h19v4H3z" fill="#777"/><path d="M1 12h15v11.500H1z" fill="#dce8f5" stroke="#888" stroke-width=".7"/><path d="M1 12h15v3H1z" fill="#6d97c4"/><path d="M3 17h4M9 17h5M3 19.500h4M9 19.500h5M3 22h4M9 22h5" stroke="#6d97c4" stroke-width="1.200"/></symbol>
<symbol id="idform" viewBox="0 0 24 24"><path d="M.5 0h23v23.500H.500z" fill="#5e6060" stroke="#444c52"/><path d="M10 4h10v5.500H10zM10 14h10v5.500H10z" fill="none" stroke="#444" stroke-width="1.100"/><path d="M3 7h4.500M3 17h4.500" stroke="#333" stroke-width="2"/></symbol>
<symbol id="pts" viewBox="0 0 24 24"><g stroke="#2b425c" stroke-width=".7"><circle cx="7.500" cy="7" r="6" fill="#eaf0f6"/><circle cx="19.500" cy="4" r="2" fill="#a9c7e8"/><circle cx="18.500" cy="16" r="4" fill="#b5d0ee"/><circle cx="6" cy="18.500" r="3" fill="#b5d0ee"/></g></symbol>
<symbol id="mouse" viewBox="0 0 24 24"><path d="M2 9l6 4M3 19l5-2M16 3l4-2M18 6h4" stroke="#bbb" stroke-width="1" stroke-dasharray="1.500 1.500"/><path d="M5 3c2-3 6-2 7 1l2 8-5 2-4-7z" fill="#222" stroke="#fff" stroke-width="1.500"/><path d="M8 4l3 8" stroke="#fff"/><path d="M11 11c5-4 10 0 10 5s-3 8-7 7-7-6-3-12z" fill="#222" stroke="#fff" stroke-width="1.500"/><circle cx="15" cy="16" r="2.500" fill="#fff"/></symbol>
<symbol id="lock" viewBox="0 0 24 28"><path d="M6 13V8a6 6 0 0 1 12 0v5" fill="none" stroke="#999" stroke-width="2.600"/><rect x="1" y="12" width="22" height="16" rx="2.500" fill="#777"/></symbol>
<symbol id="bubble" viewBox="0 0 24 24"><ellipse cx="12" cy="10.500" rx="11.800" ry="10" fill="#666"/><path d="M13 19l9 5-4-8z" fill="#666"/></symbol>
<symbol id="globe" viewBox="0 0 24 24"><path d="M6 2h12l6 9-1 2c-2 4-3 8-8 10H9C4 21 3 17 1 13l-1-2z" fill="#8a8a8a"/><circle cx="12" cy="13" r="10" fill="#c4c4c4"/><path d="M1 11h22M3 6.500h18M3 17h18M12 1v22M12 1c-7 6-7 16 0 22M12 1c7 6 7 16 0 22" fill="none" stroke="#555" stroke-width="1"/></symbol>
<symbol id="search" viewBox="0 0 24 24"><circle cx="10" cy="10" r="8" fill="none" stroke="#888" stroke-width="1.800"/><path d="M16 16l7 7" stroke="#888" stroke-width="2.600"/></symbol>
<symbol id="fl" viewBox="0 0 28 28"><circle cx="14" cy="14" r="13" fill="#4a4a4a" opacity=".8"/><path d="M11 11V8.500h10.500V15H19" fill="none" stroke="#fff" stroke-width="2"/><path d="M7 13h10v6H7z" fill="none" stroke="#fff" stroke-width="2"/></symbol>
<symbol id="cl" viewBox="0 0 28 28"><circle cx="14" cy="14" r="13" fill="#4a4a4a" opacity=".8"/><path d="M8.500 8l11 11M19.500 8l-11 11" stroke="#fff" stroke-width="4"/></symbol>
<symbol id="turn" viewBox="0 0 24 24"><path d="M3 2h17l-5 4c8 3 8 13 1 16H4c8-2 9-8 4-11l-5 4z" fill="url(#gBlue)" stroke="#2e5a8c" stroke-width=".7"/></symbol>
</defs>
</svg>

<header class="bars">
<div class="bar">
<div class="sec w398"><i class="grip"></i>
<svg class="ic"><use href="#new"/></svg><svg class="ic"><use href="#open"/></svg><svg class="ic"><use href="#save"/></svg><svg class="ic"><use href="#layout"/></svg><svg class="ic"><use href="#layoutmgr"/></svg><svg class="ic"><use href="#style"/></svg></div>
<div class="sec w1020"><i class="grip"></i>
<svg class="ic on"><use href="#pan"/></svg><svg class="ic"><use href="#pansel"/></svg><svg class="ic"><use href="#zin"/></svg><svg class="ic"><use href="#zout"/></svg><svg class="ic"><use href="#zfull"/></svg><svg class="ic"><use href="#zsel"/></svg><svg class="ic"><use href="#zlayer"/></svg><svg class="ic off"><use href="#znative"/></svg><svg class="ic"><use href="#zlast"/></svg><svg class="ic off"><use href="#znext"/></svg><svg class="ic"><use href="#newmap"/></svg><svg class="ic"><use href="#new3d"/></svg><svg class="ic"><use href="#bmnew"/></svg><svg class="ic"><use href="#bms"/></svg><svg class="ic"><use href="#clock"/></svg><svg class="ic"><use href="#refresh"/></svg></div>
<div class="sec w372"><i class="grip"></i>
<svg class="ic off"><use href="#select"/></svg><b class="ar dk"></b><svg class="ic off"><use href="#form"/></svg><b class="ar dk"></b><svg class="ic"><use href="#desel"/></svg><b class="ar"></b><svg class="ic"><use href="#selloc"/></svg><b class="ar"></b></div>
<div class="sec grow last"><i class="grip"></i>
<svg class="ic"><use href="#info"/></svg><svg class="ic off"><use href="#abacus"/></svg><svg class="ic"><use href="#gear"/></svg><svg class="ic"><use href="#sigma"/></svg><svg class="ic off"><use href="#table"/></svg><b class="ar dk"></b><svg class="ic"><use href="#measure"/></svg><b class="ar"></b><svg class="ic"><use href="#tip"/></svg><svg class="ic off"><use href="#run"/></svg><b class="ar dk"></b></div>
</div>
<div class="bar">
<div class="sec w461"><i class="grip"></i>
<svg class="ic"><use href="#addlayer"/></svg><svg class="ic"><use href="#gpkgn"/></svg><svg class="ic"><use href="#vnew"/></svg><svg class="ic"><use href="#feathern"/></svg><svg class="ic"><use href="#chipn"/></svg><svg class="ic"><use href="#meshn"/></svg><svg class="ic"><use href="#vmeshn"/></svg></div>
<div class="sec w882"><i class="grip"></i>
<svg class="ic off"><use href="#pencils"/></svg><svg class="ic off"><use href="#pencil"/></svg><svg class="ic off"><use href="#savee"/></svg><svg class="ic off"><use href="#poly"/></svg><b class="ar dk"></b><svg class="ic off"><use href="#addpt"/></svg><svg class="ic off"><use href="#vertex"/></svg><b class="ar dk"></b><svg class="ic off"><use href="#multi"/></svg><svg class="ic off"><use href="#trash"/></svg><svg class="ic off"><use href="#cut"/></svg><svg class="ic off"><use href="#copy"/></svg><svg class="ic off"><use href="#paste"/></svg><svg class="ic off"><use href="#undo"/></svg><svg class="ic off"><use href="#redo"/></svg></div>
<div class="sec w610"><i class="grip"></i>
<svg class="ic off"><use href="#label"/></svg><svg class="ic off"><use href="#diagram"/></svg><i class="vs"></i><svg class="ic"><use href="#labpin"/></svg><svg class="ic"><use href="#labred"/></svg><i class="vs"></i><svg class="ic off"><use href="#labpinx"/></svg><svg class="ic off"><use href="#labeye"/></svg><svg class="ic off"><use href="#labmove"/></svg><svg class="ic off"><use href="#labrot"/></svg><svg class="ic off"><use href="#labedit"/></svg></div>
<div class="sec w90"><i class="grip"></i><svg class="ic"><use href="#bino"/></svg></div>
<div class="sec w90"><i class="grip"></i><svg class="ic"><use href="#python"/></svg></div>
<div class="sec w90"><i class="grip"></i><svg class="ic"><use href="#help"/></svg></div>
<div class="sec grow last"><i class="grip"></i></div>
</div>
<div class="bar">
<div class="sec grow end"><i class="grip"></i>
<svg class="ic dim"><use href="#hist"/></svg><svg class="ic dim"><use href="#hista"/></svg><svg class="ic dim"><use href="#hist"/></svg><svg class="ic dim"><use href="#hista"/></svg><svg class="ic dim"><use href="#sunu"/></svg><svg class="ic dim"><use href="#sund"/></svg><svg class="ic dim"><use href="#conu"/></svg><svg class="ic dim"><use href="#cond"/></svg><svg class="ic dim"><use href="#gamu"/></svg><svg class="ic dim"><use href="#gamd"/></svg></div>
</div>
</header>

<main class="main">
<aside class="left">
<div class="title"><span>Browser</span><svg class="tb"><use href="#fl"/></svg><svg class="tb"><use href="#cl"/></svg></div>
<div class="tools"><svg class="si"><use href="#add"/></svg><svg class="si"><use href="#refresh"/></svg><svg class="si"><use href="#filter"/></svg><svg class="si"><use href="#coll"/></svg><svg class="si"><use href="#infob"/></svg></div>
<div class="sunk browser"><div class="tree">
<div class="row"><i class="ex p"></i><svg class="ti"><use href="#folder"/></svg><span>/Volumes</span></div>
<div class="row"><i class="ex"></i><svg class="ti"><use href="#star"/></svg><span>Favorites</span></div>
<div class="row"><i class="ex p"></i><svg class="ti"><use href="#bms"/></svg><span>Spatial Bookmarks</span></div>
<div class="row"><i class="ex p"></i><svg class="ti"><use href="#home"/></svg><span>Home</span></div>
<div class="row"><i class="ex p"></i><svg class="ti"><use href="#folder"/></svg><span>/ (Macintosh HD)</span></div>
<div class="row"><i class="ex"></i><svg class="ti"><use href="#gpkg"/></svg><span>GeoPackage</span></div>
<div class="row"><i class="ex"></i><svg class="ti"><use href="#feather"/></svg><span>SpatiaLite</span></div>
<div class="row"><i class="ex"></i><svg class="ti"><use href="#pg"/></svg><span>PostgreSQL</span></div>
<div class="row"><i class="ex"></i><svg class="ti"><use href="#sap"/></svg><span class="tight">SAP HANA</span></div>
<div class="row"><i class="ex"></i><svg class="ti"><use href="#mss"/></svg><span>MS SQL Server</span></div>
<div class="row"><i class="ex"></i><svg class="ti"><use href="#ora"/></svg><span>Oracle</span></div>
<div class="row"><i class="ex"></i><svg class="ti"><use href="#wms"/></svg><span class="tight">WMS/WMTS</span></div>
<div class="row"><i class="ex"></i><svg class="ti"><use href="#vt"/></svg><span>Vector Tiles</span></div>
<div class="row"><i class="ex p"></i><svg class="ti"><use href="#xyz"/></svg><span>XYZ Tiles</span></div>
<div class="row sel"><i class="ex"></i><svg class="ti"><use href="#wcs"/></svg><span class="tight">WCS</span></div>
<div class="row"><i class="ex"></i><svg class="ti"><use href="#wfs"/></svg><span>WFS / OGC API - Features</span></div>
<div class="row"><i class="ex"></i><svg class="ti"><use href="#arc"/></svg><span>ArcGIS REST Servers</span></div>
</div></div>
<div class="title lay"><span>Layers</span><svg class="tb"><use href="#fl"/></svg><svg class="tb"><use href="#cl"/></svg></div>
<div class="tools"><svg class="si"><use href="#brush"/></svg><svg class="si"><use href="#grp"/></svg><span class="dd"><svg class="si"><use href="#eye"/></svg></span><span class="dd"><svg class="si"><use href="#filter"/></svg></span><svg class="si dim"><use href="#eps"/></svg><b class="ar dk nar"></b><svg class="si"><use href="#expa"/></svg><svg class="si"><use href="#coll"/></svg><svg class="si"><use href="#rem"/></svg></div>
<div class="sunk layers">
<div class="ltree">
<div class="row lr"><i class="ex m"></i><i class="cb g"></i><svg class="pi"><use href="#pts"/></svg><span class="it">ground.copc</span></div>
<div class="row lr sub"><i class="elbow"></i><i class="cb"></i><i class="sw"></i><span>Ground</span></div>
<div class="row lr lsel"><i class="ex p"></i><i class="cb ck"></i><svg class="pi"><use href="#pts"/></svg><span class="bd">denoised-ground-only.copc</span></div>
<div class="row lr"><i class="ex m"></i><i class="cb g"></i><svg class="pi"><use href="#pts"/></svg><span class="it wide">CSite1_orig-utm</span></div>
<div class="ramp"><i class="rl"></i><div class="rc"><div class="rt">Intensity</div><div class="rb"><i class="grad"></i><div class="rv"><span>7,395</span><span>0</span></div></div></div></div>
<div class="row lr"><i class="ex p"></i><i class="cb g"></i><svg class="pi"><use href="#pts"/></svg><span class="it">denoised-ground-only</span></div>
</div>
<div class="vsb"><i class="sb up"></i><i class="th"></i><i class="tr"></i><i class="sb dn"></i></div>
</div>
</aside>

<section class="center">
<div class="title c3"><span>3D Map 5</span><svg class="tb"><use href="#fl"/></svg><svg class="tb"><use href="#cl"/></svg></div>
<div class="tools c3t"><svg class="si on"><use href="#pan"/></svg><svg class="si"><use href="#zfull"/></svg><svg class="si on"><use href="#dial"/></svg><i class="vs"></i><svg class="si"><use href="#info"/></svg><svg class="si"><use href="#measure"/></svg><svg class="si"><use href="#play"/></svg><svg class="si"><use href="#export"/></svg><svg class="si"><use href="#cube"/></svg><i class="vs"></i><span class="dd"><svg class="si"><use href="#eye"/></svg></span><i class="vs"></i><span class="dd"><svg class="si"><use href="#wrench"/></svg></span><svg class="si on"><use href="#win"/></svg></div>
<div class="viewrow">
<svg class="scene" viewBox="596 308 1408 1078">
<defs>
<filter id="soft" x="-10%" y="-10%" width="120%" height="120%"><feGaussianBlur stdDeviation="18 22"/></filter>
<filter id="rough" x="-2%" y="-2%" width="104%" height="104%"><feTurbulence type="fractalNoise" baseFrequency=".12" numOctaves="2" seed="4"/><feDisplacementMap in="SourceGraphic" scale="8" xChannelSelector="R" yChannelSelector="G"/></filter>
<clipPath id="land"><path d="M343 190 400 192 428 206 455 185 475 155 495 128 540 115 570 114 575 119 635 118 690 110 725 120 733 98 740 113 815 117 905 121 930 122 965 135 1000 142 1040 150 1100 153 1145 175 1175 200 1200 238 1225 268 1265 295 1285 320 1325 330 1345 358 1370 375 1395 430 1415 490 1430 540 1445 600 1452 650 1464 680 1460 695 1420 712 1413 725 1400 700 1388 735 1390 747 1487 747 1490 775 1505 830 1513 890 1530 912 1540 960 1561 1010 1575 1160 1561 1155 1545 1130 1548 1095 1525 1143 1410 1138 1360 1118 1305 1080 1305 1100 1275 1100 1225 1088 1120 1070 1080 1060 1062 1030 1022 955 1038 1048 1022 1052 985 975 950 990 978 1005 975 1037 935 1030 930 1003 905 1003 895 1025 860 1000 855 962 830 965 825 985 775 985 742 992 740 972 650 972 615 968 590 935 565 950 530 945 485 905 462 892 425 888 405 903 320 890 270 878 130 868 100 850 95 870 30 865 0 855 0 775 65 630 110 572 130 525 220 400 300 280Z"/></clipPath>
</defs>
<rect x="596" y="308" width="1408" height="1078" fill="#fff"/>
<g transform="translate(590 440) scale(.9056 .3333)">
<g filter="url(#rough)"><g clip-path="url(#land)">
<rect width="1600" height="1250" fill="#403f9f"/>
<g filter="url(#soft)">
<path fill="#4458cb" d="M-60 0V1250H1060L1150 1040 1250 960 1280 860 1380 770 1640 790V0Z"/>
<path fill="#4674ee" d="M-60 0V1250H840L930 990 1000 860 1150 800 1280 730 1640 730V0Z"/>
<path fill="#3f96fe" d="M-60 0V1250H480L620 920 740 890 880 830 1000 750 1130 770 1230 680 1640 650V0Z"/>
<path fill="#2bb2ee" d="M-60 0V910L300 950 450 920 560 820 700 790 880 770 980 700 1100 670 1250 620 1450 590 1640 600V0Z"/>
<path fill="#1cd0cc" d="M-60 0V720L60 780 200 850 420 860 450 740 560 720 610 640 620 540 650 560 700 740 850 735 950 690 1060 640 1150 600 1300 590 1420 550 1430 500 1380 400 1350 340 1400 0Z"/>
<path fill="#1fe2ad" d="M-60 0V700L100 760 300 790 370 720 400 640 480 570 570 470 620 520 680 660 780 700 880 690 1000 620 1180 560 1300 550 1370 500 1340 400 1310 330 1340 0Z"/>
<path fill="#42f285" d="M-60 0V660L90 640 240 700 350 640 310 560 290 470 330 400 440 380 560 400 620 430 660 560 740 640 850 630 980 590 1100 540 1300 530 1320 450 1270 340 1250 280 1280 0Z"/>
<path fill="#5ffc68" d="M-60 0V560L130 560 230 480 300 380 440 370 560 390 640 460 700 590 800 625 900 610 1050 550 1250 525 1310 450 1265 345 1240 270 1260 0Z"/>
<path fill="#93ff42" d="M240 350 320 330 420 360 560 370 620 390 660 480 700 580 800 615 900 600 1050 540 1250 510 1300 450 1260 350 1210 260 1240 0H240Z"/>
<path fill="#b9f534" d="M290 230 350 230 430 300 500 340 600 350 660 400 700 500 800 560 900 550 1060 500 1250 470 1270 400 1190 240 1200 0H300Z"/>
<path fill="#e6d838" d="M420 180 470 270 560 300 640 270 690 390 730 465 820 505 930 485 1060 420 1130 370 1220 390 1200 300 1190 0H400Z"/>
<path fill="#fcae35" d="M440 150 500 235 580 265 640 230 690 330 740 430 850 445 980 415 1060 350 1100 270 1170 280 1190 0H440Z"/>
<path fill="#f97b1d" d="M460 130 520 200 600 230 670 220 720 320 740 390 900 400 1000 370 1060 310 1080 230 1160 210 1180 0H460Z"/>
<path fill="#e4500e" d="M480 50 530 170 620 190 700 200 710 240 780 290 900 350 1010 330 1050 260 1060 190 1140 160V50Z"/>
<path fill="#c42503" d="M680 50 720 180 790 220 880 240 950 300 1030 270 1010 200 980 50Z"/>
<path fill="#850902" d="M810 60 830 150 860 195 920 225 990 250 960 190 910 60Z"/>
</g>
<g fill="#2f9cf8" opacity=".4"><path d="M1385 830 1420 790 1465 810 1475 860 1430 890ZM1410 1020 1480 990 1485 1030ZM740 830 780 820 800 890 770 900ZM840 935 860 930 865 960 845 960ZM1090 740 1160 740 1150 790 1100 780ZM1135 1000 1150 990 1170 1020 1140 1020Z"/></g>
<path fill="#413a90" opacity=".55" d="M1330 1050 1420 1050 1430 1140 1390 1110ZM1240 830 1260 850 1240 860ZM1470 900h20v20h-20Z"/>
</g>
<g fill="#fff">
<path d="M803 188 815 175 828 172 845 162 848 168 830 178 812 190ZM316 458 322 458 332 508 326 505ZM284 526l8-10v18ZM356 545l6-4 8 20-6 2ZM468 560l6-5 6 2-4 12ZM424 628l16-5 4 30-8 4-4-18ZM110 655 128 648 146 675 146 690 128 700 124 672ZM188 680 196 650 212 645 206 656 196 684ZM168 718 194 716 190 738 180 740ZM74 745l6-14 4 12ZM326 745 336 715 344 718 334 746ZM345 732 365 716 378 718 355 736ZM200 820 230 778 232 795 212 822ZM236 765l10-8 2 16-8 10ZM286 780 302 772 308 785 290 792ZM280 820 290 800 294 815ZM300 828h15v5h-15ZM424 768l14 12 2 10-12-6ZM415 849h32v5h-32ZM458 815l6-8 6 16ZM82 835l10-12v10ZM120 766h8v6h-8ZM495 735l5 25-4-4ZM512 795l10-15v14ZM562 860 600 838 586 835 592 810 610 805 620 825 640 830 605 845 565 868ZM645 822 675 815 675 822 650 828ZM652 780 684 770 684 778 655 788ZM583 756l20-5v4l-20 5ZM627 740 668 727 668 732 630 744ZM645 675l10 22-4 5ZM655 620l8 20-4 8ZM700 680l7 14-3 2ZM718 710 728 695 742 718 732 712ZM762 690 775 685 770 698ZM790 645 802 640 802 695 786 692ZM922 678l6-4 4 32-6 3ZM944 680l5-4-2 30-5 2ZM862 625l8 8-4 6ZM828 740 842 730 836 746ZM845 720l6-10v18ZM866 710l5-4 1 30-5-5ZM912 775 920 790 932 848 924 846ZM758 854 775 865 800 915 820 905 826 922 780 935ZM814 850l20 14-2 3-14-8ZM860 962 975 925 980 934 870 968ZM965 775l12-4-5 14ZM988 798l6-4-4 12ZM1040 770 1060 785 1082 840 1074 842ZM1020 848 1038 850 1024 858ZM1095 778l14 24-4 5ZM1120 797 1155 785 1152 776 1164 782 1176 824 1162 820 1156 795 1128 802ZM1128 830h20v4h-20ZM886 850l8-16 2 10Z"/>
<path d="M1050 660 1075 655 1062 672 1072 715 1098 725 1104 712 1130 712 1140 715 1150 730 1176 700 1180 682 1194 705 1203 682 1200 720 1222 728 1244 796 1232 784 1218 742 1196 740 1190 752 1172 735 1142 735 1136 720 1068 732 1056 690ZM1088 645 1098 652 1102 680 1115 700 1106 702 1092 682ZM1112 645 1124 632 1134 668 1140 692 1130 690 1122 664ZM1256 650 1270 655 1274 682 1266 680ZM1300 672 1324 674 1332 712 1318 712 1316 684ZM1276 712 1285 706 1304 730 1330 735 1344 720 1366 726 1360 740 1350 735 1330 750 1312 752 1306 766 1286 735ZM1380 660 1395 700 1400 725 1390 720ZM1405 668 1442 660 1442 665 1408 675ZM1436 775 1482 768 1482 776 1460 780 1450 800 1446 785ZM1370 812 1384 820 1388 850 1378 842ZM1466 805 1502 858 1494 862ZM1388 858 1440 895 1452 918 1440 912ZM1458 872 1470 880 1484 912 1470 905ZM1060 925 1076 935 1098 1000 1090 1000 1072 975ZM1104 895 1176 1015 1180 1028 1140 1032 1138 1042 1118 1040 1122 1018 1130 1032 1168 1022 1160 1000ZM1150 878 1214 990 1226 1000 1206 1012 1200 980ZM1190 862 1202 866 1246 950 1240 958 1216 915ZM1238 850 1252 846 1256 865 1284 910 1312 955 1332 960 1330 968 1306 968 1274 912ZM1284 882 1300 895 1330 935 1340 930 1354 962 1350 970 1312 932ZM1204 992 1230 998 1240 992 1252 975 1256 988 1270 992 1262 1006 1240 1006 1210 1012ZM1272 1062 1296 1045 1384 1027 1384 1038 1305 1055 1294 1095 1288 1066ZM1410 1020 1425 1030 1474 1022 1470 1055 1454 1080ZM1396 942 1420 948 1410 960 1398 956ZM1362 895l8-4v10ZM1412 870l8-4-2 12ZM1040 905l6-4 2 12ZM1375 925l18-6-10 12ZM720 902h10l-5 16ZM1222 828h10v5h-10Z"/>
<path d="M370 484h8v4h-8ZM193 515h5v8h-5ZM258 570h5v6h-5ZM580 215h4v6h-4ZM662 185h3v8h-3ZM434 275h3v7h-3ZM318 270h3v8h-3ZM736 275h3v7h-3ZM992 305h3v7h-3ZM1130 300h9v6h-9ZM1102 428l5-12 6 14ZM1040 480l6-18 4 28-10 2ZM1014 470h4v12h-4ZM1016 495h4v14h-4ZM732 470h8v8h-8ZM773 485h3v20l-6 10ZM788 540h8v5h-8ZM904 570l10-4 10 3-10 8ZM946 555h4v10h-4ZM618 432l10 16-4 2ZM670 295h5v6h-5ZM694 318h3v8h-3ZM684 412h3v8h-3ZM660 382h3v8h-3ZM546 482h5v6h-5ZM1306 345h4v12h-4ZM1306 382h4v20h-4ZM1374 455h4v12h-4ZM640 560h3v10h-3ZM394 588h4v8h-4ZM1105 540h3v14h-3ZM975 635h4v10h-4ZM325 628h5v8h-5ZM1165 835h5v8h-5ZM766 768h6v6h-6ZM808 768h4v8h-4ZM840 770h7v8h-7ZM1070 460h3v14h-3ZM475 705l10 5-3 4Z"/>
</g></g></g>
<text x="1819" y="371" class="ax">up</text><text x="1835" y="429" class="ax">Y?</text>
<path d="M1822 493 1824 462 1831 454 1836 464 1830 474Z" fill="#44f044"/><path d="M1822 480 1825 462 1832 458 1829 473 1824 490Z" fill="#00a400"/>
<path d="M1813 490V419h-4.500L1818 392l9.500 27H1822v74l-4 5Z" fill="#0000b4"/>
<path d="M1817 496 1821 490 1897 495v-5l28 10.500-28 7V502L1819 498Z" fill="#b00000"/>
</svg>
<div class="cam">
<div class="nav">
<svg class="nv" viewBox="0 0 28 28"><path d="M14 3 27 24H1z" fill="#6d97c4" stroke="#3c5a7c" stroke-width="1.500"/></svg>
<svg class="nv"><use href="#turn"/></svg><svg class="nv z"><use href="#zin"/></svg>
<svg class="nv" viewBox="0 0 28 28"><path d="M5 14 23 1v26z" fill="#6d97c4" stroke="#3c5a7c" stroke-width="1.500"/></svg>
<svg class="compass" viewBox="0 0 172 172"><circle cx="86" cy="86" r="82" fill="#1e1e1e" stroke="url(#gRing)" stroke-width="8"/><path d="M92.500 37 78.500 85l7.500.5Z" fill="#e60000"/><path d="M92.500 37 94 87l-8-1.500Z" fill="#ff1a1a"/><path d="M79.500 134 78.500 85l7.500.5Z" fill="#ccc"/><path d="M79.500 134 94 87l-8-1.500Z" fill="#fff"/><g class="dir"><text x="86" y="36">N</text><text x="86" y="158">S</text><text x="24" y="97">W</text><text x="144" y="97">E</text></g></svg>
<svg class="nv" viewBox="0 0 28 28"><path d="M23 14 5 1v26z" fill="#6d97c4" stroke="#3c5a7c" stroke-width="1.500"/></svg>
<svg class="nv" viewBox="0 0 28 28"><path d="M14 25 1 4h26z" fill="#6d97c4" stroke="#3c5a7c" stroke-width="1.500"/></svg>
<svg class="nv flip"><use href="#turn"/></svg><svg class="nv z"><use href="#zout"/></svg>
</div>
<div class="dbg"><i class="qcb"></i><span>Show camera info (for debugging)</span></div>
</div>
</div>
<div class="canvas"><svg class="site" viewBox="0 0 960 660"><path fill="#aa5500" d="M60 78H113V75H160V78H243V76H258V78H300V81H310V78H338L350 72H372V69H423V72H486V69H510V77H514V69H570V75L582 67H598V63H655V66H690V69H723V66H765V63H780V66H831V69H900V84L895 96 900 98V240L896 246 900 250V360L888 362 874 374 855 376 853 384 834 386 836 389H898V456L890 460 892 476 888 478H900V602H870L867 594 863 602H852V599H843V602H780V598L771 594 765 602H735V599H725V602H708V599H690V602H648L640 590 630 570 632 578 640 602H617L603 573 594 576 602 584 610 602H577L574 588 570 600H530L526 592 500 599H478L474 594 465 600H435V603H410V600H365V597H338L330 602H300V600H276V602H250V599H224V602H206V599H195V602H165V599H150L146 594 143 602H105V599H90V602H75V599H66V602H60V575L57 570V550L60 545V525L57 515V495L60 490V435L57 425V410L60 405V345L64 340 60 335 57 325V310L60 300V262L57 258V248L60 245V210L57 190V170L60 165 57 150V140L60 135 63 124H60Z"/><g fill="#fff"><path d="M443 188H573L576 186H600L604 183H624V186L612 190 600 196 586 201H575L565 195 550 192H470V197L458 192H443ZM529 582 548 572 575 560 600 548 606 550 580 566 550 580 531 590ZM695 402l6 4h18l4-4h10l-4 8-4 14-6-5-12 1-2 4-5-10ZM108 507h16l-5 4v10l6 4h-14l3-4v-10ZM394 532h12v10l-18 9 7-9ZM190 345l5 2 3 6-8-2ZM172 300l8-6v5l-7 4ZM96 402h8v6l-4 5ZM274 456l8 8-4 1ZM198 394h3v8h-3ZM210 404l8 5-2 2ZM426 527l10-6 1 3-10 6ZM456 468h6v3h-6ZM822 550 843 537v6l-18 9ZM830 570l6-8-2 8ZM775 525l18-3v-10h3v12l-20 4ZM628 495l6-3 2 8-7-1ZM822 436h6v8h-3ZM868 410l10-8v14ZM867 94h3v20h-3ZM702 190l5-1 4 5h-9ZM245 531h4v6h-4ZM98 504h6v3h-6ZM153 504h6v3h-6ZM517 557l5 2-4 5ZM818 387h8v3h-8ZM750 582h6v3h-6Z"/><path d="M576 132h3v3h-3ZM771 186h3v3h-3ZM423 249h3v3h-3ZM387 294h3v3h-3ZM180 339h3v3h-3ZM222 360h3v3h-3ZM255 342h3v3h-3ZM240 369h3v3h-3ZM204 381h3v3h-3ZM153 399h3v3h-3ZM123 444h3v3h-3ZM222 471h3v3h-3ZM180 495h3v3h-3ZM171 501h3v3h-3ZM306 537h3v3h-3ZM327 552h3v3h-3ZM558 408h3v3h-3ZM633 432h3v3h-3ZM657 426h3v3h-3ZM675 417h3v3h-3ZM642 453h3v3h-3ZM699 465h3v3h-3ZM717 483h3v3h-3ZM741 528h3v3h-3ZM762 501h3v3h-3ZM768 513h3v3h-3ZM546 540h3v3h-3ZM489 537h3v3h-3ZM495 546h3v8h-3ZM504 567h3v3h-3ZM514 549h3v3h-3ZM651 543h3v5h-3ZM771 375h3v3h-3ZM738 417h3v3h-3ZM789 507h3v3h-3Z"/></g></svg></div>
</section>

<aside class="right">
<div class="title"><span>Identify Results</span><svg class="tb"><use href="#fl"/></svg><svg class="tb"><use href="#cl"/></svg></div>
<div class="tools"><svg class="si idf"><use href="#idform"/></svg><i class="vs"></i><svg class="si"><use href="#expa"/></svg><svg class="si"><use href="#coll"/></svg><svg class="si"><use href="#stara"/></svg><i class="vs"></i><svg class="si"><use href="#desel"/></svg><i class="vs"></i><span class="more">»</span></div>
<div class="sunk ident"><div class="hd"><span class="hf">Feature</span><span class="hv">Value</span></div><div class="body"></div><div class="hsb"><i class="sb lf"></i><i class="th"></i><i class="tr"></i><i class="sb rt2"></i></div></div>
<div class="frm"><label>Mode</label><div class="combo cm"><span>Current Layer</span><i class="cbtn"></i></div></div>
<div class="frm f2 dis"><label>View</label><div class="combo cv"><span>Tree</span><i class="cbtn"></i></div></div>
</aside>
</main>

<footer class="status">
<div class="fld loc"><svg class="se"><use href="#search"/></svg><span>Type to locate (⌘K)</span></div>
<span class="lb l1">Coordinate</span><div class="fld coord">514604,5404350</div><svg class="ms"><use href="#mouse"/></svg>
<span class="lb l2">Scale</span><div class="fld scale"><span>1:45052</span><i class="cbtn"></i></div><svg class="lk"><use href="#lock"/></svg>
<span class="lb l3">Magnifier</span><div class="fld spin"><span>100%</span><i class="sp"><b></b><b></b></i></div>
<span class="lb l4">Rotation</span><div class="fld spin s2"><span>0.0 °</span><i class="sp"><b></b><b></b></i></div>
<i class="qcb rk"></i><span class="lb l5">Render</span><svg class="gl"><use href="#globe"/></svg><span class="lb l6">Unknown CRS</span><svg class="bb"><use href="#bubble"/></svg>
</footer>
</body>
</html>
```
FILE: styles.css
```css
* { box-sizing: border-box; }
body { margin: 0; width: 2940px; height: 1840px; overflow: hidden; background: #323232; color: #e4e4e4; font: 22px/1 Inter, "Liberation Sans", sans-serif; display: flex; flex-direction: column; }
.defs { position: absolute; width: 0; height: 0; }
i, b { font-style: normal; display: block; flex: none; }
svg { flex: none; display: block; }
text { font-family: Inter, "Liberation Sans", sans-serif; }
.t-a { font: bold 14px "Roboto", sans-serif; fill: #333; stroke: #ddd; stroke-width: .8px; }
.t-11 { font: bold 8px "Liberation Sans", sans-serif; fill: #111; }
.t-i { font: italic bold 16px "Liberation Serif", serif; fill: #fff; }
.t-abc { font: bold 7.500px "Liberation Sans", sans-serif; fill: #2a2a2a; }
.t-abc.red { fill: #f00; }
.t-q { font: 17px "Liberation Serif", serif; fill: #fff; }

/* toolbars */
.bars { flex: none; height: 204px; }
.bar { display: flex; height: 68px; }
.sec { display: flex; align-items: center; height: 67px; border-bottom: 2px solid #bdbdbd; border-right: 2px solid #bdbdbd; box-shadow: inset 0 1px #3a3a3a; flex: none; padding-top: 2px; }
.sec.grow { flex: 1; }
.sec.last { border-right: 0; }
.end { margin-right: 2px; }
.w398 { width: 399px; }
.w1020 { width: 1020px; }
.w372 { width: 372px; }
.w461 { width: 461px; }
.w882 { width: 882px; }
.w610 { width: 610px; }
.w90 { width: 90px; }
.grip { width: 11px; height: 52px; margin: 2px 6px 0 7px; border-bottom: 2px solid #bdbdbd; background: linear-gradient(90deg, #222 0 2px, #323232 2px 3px, #bdbdbd 3px 5px, #222 6px 8px, #323232 8px 9px, #bdbdbd 9px 11px); }
.w398 .grip, .w461 .grip, .end .grip { margin-right: 5px; }
.ic { width: 62px; height: 58px; padding: 5px 7px; }
.on { border-left: 2px solid #bdbdbd; border-top: 2px solid #bdbdbd; background: #2b2b2b; }
.off { opacity: .33; }
.dim { opacity: .25; }
.ar { width: 24px; height: 8px; background: #eee; clip-path: polygon(3px 0, 21px 0, 12px 100%); }
.ar.dk { background: #1c1c1c; }
.vs { width: 12px; height: 52px; background: linear-gradient(90deg, transparent 8px, #bdbdbd 8px 10px, transparent 10px); }

/* docks */
.main { flex: none; height: 1580px; display: flex; }
.left { width: 596px; padding-right: 9px; display: flex; flex-direction: column; }
.title { height: 50px; display: flex; align-items: center; padding: 1px 7px 0 4px; flex: none; }
.title span { flex: 1; letter-spacing: -.05px; }
.title.lay { margin-top: 10px; }
.tb { width: 28px; height: 28px; margin-left: 14px; }
.tools { height: 54px; display: flex; align-items: center; padding: 1px 0 0 3px; flex: none; }
.lay + .tools { height: 53px; }
.si { width: 46px; height: 44px; padding: 6px 7px; }
.dd { position: relative; display: block; flex: none; }
.dd::after { content: ""; position: absolute; right: 3px; bottom: 8px; width: 10px; height: 5px; background: #eee; clip-path: polygon(0 0, 100% 0, 50% 100%); }
.nar { width: 24px; height: 6px; }
.sunk { border-left: 2px solid #bdbdbd; border-top: 2px solid #bdbdbd; border-right: 3px solid #2a2a2a; border-bottom: 2px solid #363636; background: #1e1e1e; box-shadow: inset 1px 1px #000; }
.browser { height: 773px; flex: none; padding: 2px 0 0; font-size: 26px; color: #fff; }
.tree { background: repeating-linear-gradient(#9a9a9a 0 2px, transparent 2px 4px) 18px 0 / 2px 594px no-repeat; }
.row { height: 36px; display: flex; align-items: center; letter-spacing: -.3px; white-space: nowrap; }
.tight { letter-spacing: -.7px; }
.ex { width: 34px; height: 36px; position: relative; background: repeating-linear-gradient(90deg, #9a9a9a 0 2px, transparent 2px 4px) 22px 17px / 10px 2px no-repeat; }
.ex.p::before, .ex.m::before { content: ""; position: absolute; left: 9px; top: 9px; width: 18px; height: 18px; border: 2px solid #c4c4c4; background: linear-gradient(#ddd, #ddd) center / 10px 2px no-repeat, linear-gradient(#ddd, #ddd) center / 2px 10px no-repeat, #1e1e1e; }
.ex.m::before { background: linear-gradient(#ddd, #ddd) center / 10px 2px no-repeat, #1e1e1e; }
.ti { width: 32px; height: 32px; margin: 0 12px 0 6px; }
.row.sel { background: linear-gradient(#464646, #464646) 34px 0 / 370px 36px no-repeat; }
.layers { flex: none; height: 589px; display: flex; font-size: 26px; color: #fff; }
.ltree { width: 551px; height: 585px; overflow: hidden; background: repeating-linear-gradient(#9a9a9a 0 2px, transparent 2px 4px) 22px 0 / 2px 580px no-repeat; padding-top: 2px; }
.lr .ex { width: 42px; background-position: 30px 17px; }
.lr .ex::before { left: 13px; }
.cb { width: 25px; height: 23px; border: 2px solid #fff; margin-left: 7px; }
.cb.g { border-color: #808080; }
.ck { background: #1e1e1e; position: relative; }
.ck::after { content: ""; position: absolute; left: 6px; top: 0; width: 8px; height: 13px; border: solid #e4e4e4; border-width: 0 4px 4px 0; transform: rotate(42deg); }
.pi { width: 29px; height: 29px; margin: 0 13px 0 14px; }
.it { font-weight: 700; font-style: italic; color: #8a8a8a; letter-spacing: .1px; }
.it.wide { letter-spacing: .6px; }
.bd { font-weight: 700; text-decoration: underline; text-decoration-thickness: 2px; text-underline-offset: 3px; letter-spacing: -.1px; }
.lsel { background: linear-gradient(#464646, #464646) 42px 0 no-repeat; }
.elbow { width: 18px; height: 18px; margin: 0 0 18px 62px; background: repeating-linear-gradient(#9a9a9a 0 2px, transparent 2px 4px) 0 0 / 2px 18px no-repeat, repeating-linear-gradient(90deg, #9a9a9a 0 2px, transparent 2px 4px) 0 16px / 18px 2px no-repeat; }
.sub .cb { margin-left: 9px; }
.sw { width: 32px; height: 32px; background: #aa5500; margin: 0 12px 0 12px; }
.ramp { height: 419px; display: flex; }
.rl { width: 20px; margin: 0 6px 0 62px; background: repeating-linear-gradient(#9a9a9a 0 2px, transparent 2px 4px) 0 2px / 2px 224px no-repeat, repeating-linear-gradient(90deg, #9a9a9a 0 2px, transparent 2px 4px) 2px 16px / 18px 2px no-repeat, repeating-linear-gradient(90deg, #9a9a9a 0 2px, transparent 2px 4px) 0 226px / 18px 2px no-repeat; }
.rt { height: 34px; line-height: 32px; letter-spacing: -.3px; }
.rb { display: flex; height: 385px; }
.grad { width: 64px; background: linear-gradient(#fde725, #dde318 5%, #a0da39 14%, #4ac16d 29%, #1fa187 43%, #277f8e 57%, #365c8d 71%, #46327e 86%, #440154); }
.rv { display: flex; flex-direction: column; justify-content: space-between; padding: 5px 0 3px 13px; color: #060606; font-size: 25px; font-weight: 500; letter-spacing: .5px; }
.vsb { width: 32px; display: flex; flex-direction: column; padding-top: 1px; }
.sb, .th { background: #323232; border-right: 2px solid #bdbdbd; border-bottom: 2px solid #bdbdbd; position: relative; }
.vsb .sb { height: 32px; }
.vsb .th { height: 286px; }
.tr { flex: 1; background: #363636; }
.sb::after { content: ""; position: absolute; left: 7px; top: 11px; width: 16px; height: 8px; background: #000; clip-path: polygon(0 100%, 50% 0, 100% 100%); }
.dn::after { clip-path: polygon(0 0, 50% 100%, 100% 0); }

/* 3D map and main canvas */
.center { width: 2022px; display: flex; flex-direction: column; }
.c3 { padding: 1px 4px 0 4px; margin-right: 4px; }
.c3t { padding-left: 4px; }
.c3t .vs, .right .vs { width: 12px; height: 36px; background-position: -3px 0; }
.c3t .vs { width: 11px; }
.tools .on { height: 43px; border-width: 1.500px; padding: 5px 6px; }
.viewrow { display: flex; height: 1078px; }
.scene { width: 1408px; height: 1078px; }
.ax { font-size: 24px; font-weight: 600; fill: #cbcbcb; }
.cam { flex: 1; padding-top: 26px; }
.nav { display: grid; grid-template-columns: 68px 1fr 58px; grid-template-rows: 38px 204px 36px; place-items: center; height: 278px; }
.nv { width: 28px; height: 28px; }
.nv.z { width: 32px; height: 32px; }
.flip { transform: scaleY(-1); }
.compass { width: 172px; height: 172px; }
.dir { font-size: 26px; fill: #e4e4e4; text-anchor: middle; }
.dbg { display: flex; align-items: center; margin: 16px 0 0 12px; height: 42px; font-size: 26px; letter-spacing: -.2px; }
.qcb { width: 25px; height: 25px; background: #1e1e1e; border-left: 2px solid #bdbdbd; border-top: 2px solid #bdbdbd; margin-right: 11px; position: relative; }
.canvas { margin-top: 8px; height: 388px; background: #fff; border-left: 3px solid #1a1a1a; border-top: 3px solid #1a1a1a; outline: 1px solid #777; margin-right: 4px; margin-left: 1px; }
.site { width: 320px; height: 220px; margin: 63px 0 0 820px; }

/* identify */
.right { flex: 1; padding-left: 8px; display: flex; flex-direction: column; }
.right .title { padding: 1px 8px 0 4px; }
.right .title span { letter-spacing: 0; }
.right .tools { padding-left: 3px; }
.si.idf { padding: 7px 9px; }
.more { color: #444; font-size: 26px; margin-left: 19px; }
.ident { height: 1347px; flex: none; padding: 2px; margin-right: 1px; display: flex; flex-direction: column; }
.hd { height: 41px; display: flex; background: #323232; color: #fff; border-bottom: 2px solid #bdbdbd; line-height: 42px; letter-spacing: -.1px; }
.hf { width: 199px; border-right: 2px solid #bdbdbd; padding-left: 8px; }
.hv { padding-left: 9px; }
.body { flex: 1; }
.hsb { display: flex; height: 32px; }
.hsb .sb { width: 31px; }
.hsb .th { width: 184px; }
.hsb .sb::after { left: 10px; top: 8px; width: 8px; height: 14px; clip-path: polygon(100% 0, 0 50%, 100% 100%); }
.hsb .rt2::after { clip-path: polygon(0 0, 100% 50%, 0 100%); }
.frm { display: flex; align-items: center; height: 44px; margin: 11px 0 0 10px; font-size: 25px; color: #fff; letter-spacing: 0; }
.frm label { width: 82px; }
.f2 { margin-top: 16px; }
.f2 label { width: 72px; }
.dis { color: #5e5e5e; }
.combo { display: flex; justify-content: space-between; align-items: center; height: 43px; border-left: 2px solid #bdbdbd; border-top: 2px solid #bdbdbd; box-shadow: inset 1px 1px #000; padding: 0 3px 0 6px; color: #e4e4e4; white-space: nowrap; }
.dis .combo { color: #5e5e5e; }
.cm { width: 211px; }
.cv { width: 161px; }
.cbtn { width: 31px; height: 34px; border-right: 2px solid #bdbdbd; border-bottom: 2px solid #bdbdbd; background: #323232; position: relative; }
.cbtn::after { content: ""; position: absolute; left: 8px; top: 12px; width: 14px; height: 8px; background: #000; clip-path: polygon(0 0, 50% 100%, 100% 0); }
.dis .cbtn::after { background: #222; }

/* status bar */
.status { flex: 1; display: flex; align-items: center; padding: 3px 0 0 8px; color: #eee; white-space: nowrap; }
.fld { height: 42px; background: #1e1e1e; border-left: 2px solid #bdbdbd; border-top: 2px solid #bdbdbd; border-right: 3px solid #363636; border-bottom: 3px solid #363636; display: flex; align-items: center; color: #fff; font-size: 23px; flex: none; padding-top: 1px; }
.loc { width: 427px; color: #8a8a8a; font-size: 25px; letter-spacing: -.1px; }
.se { width: 25px; height: 25px; margin: 0 18px 0 15px; }
.lb { flex: none; letter-spacing: -.1px; padding-top: 1px; }
.l1 { width: 122px; margin-left: 749px; }
.coord { width: 221px; height: 38px; padding-left: 14px; font-size: 22px; letter-spacing: .2px; }
.ms { width: 30px; height: 32px; margin: 0 26px 0 9px; }
.l2 { width: 65px; }
.scale { width: 187px; padding-left: 7px; justify-content: space-between; font-size: 22px; }
.lk { width: 24px; height: 30px; margin: 0 20px 0 23px; }
.l3 { width: 106px; }
.spin { width: 184px; padding-left: 6px; justify-content: space-between; font-size: 22px; }
.l4 { width: 105px; margin-left: 20px; }
.sp { width: 30px; }
.sp b { height: 18px; background: #323232; border-right: 2px solid #bdbdbd; border-bottom: 2px solid #bdbdbd; position: relative; }
.sp b::after { content: ""; position: absolute; left: 10px; top: 6px; width: 8px; height: 4px; background: #000; clip-path: polygon(0 100%, 50% 0, 100% 100%); }
.sp b + b::after { clip-path: polygon(0 0, 50% 100%, 100% 0); }
.rk { margin-left: 14px; }
.rk::after { content: ""; position: absolute; left: 8px; top: 1px; width: 7px; height: 14px; border: solid #fff; border-width: 0 3px 3px 0; transform: rotate(40deg); }
.l5 { width: 108px; }
.gl { width: 31px; height: 28px; margin-right: 5px; }
.l6 { width: 188px; }
.bb { width: 33px; height: 30px; }
```
